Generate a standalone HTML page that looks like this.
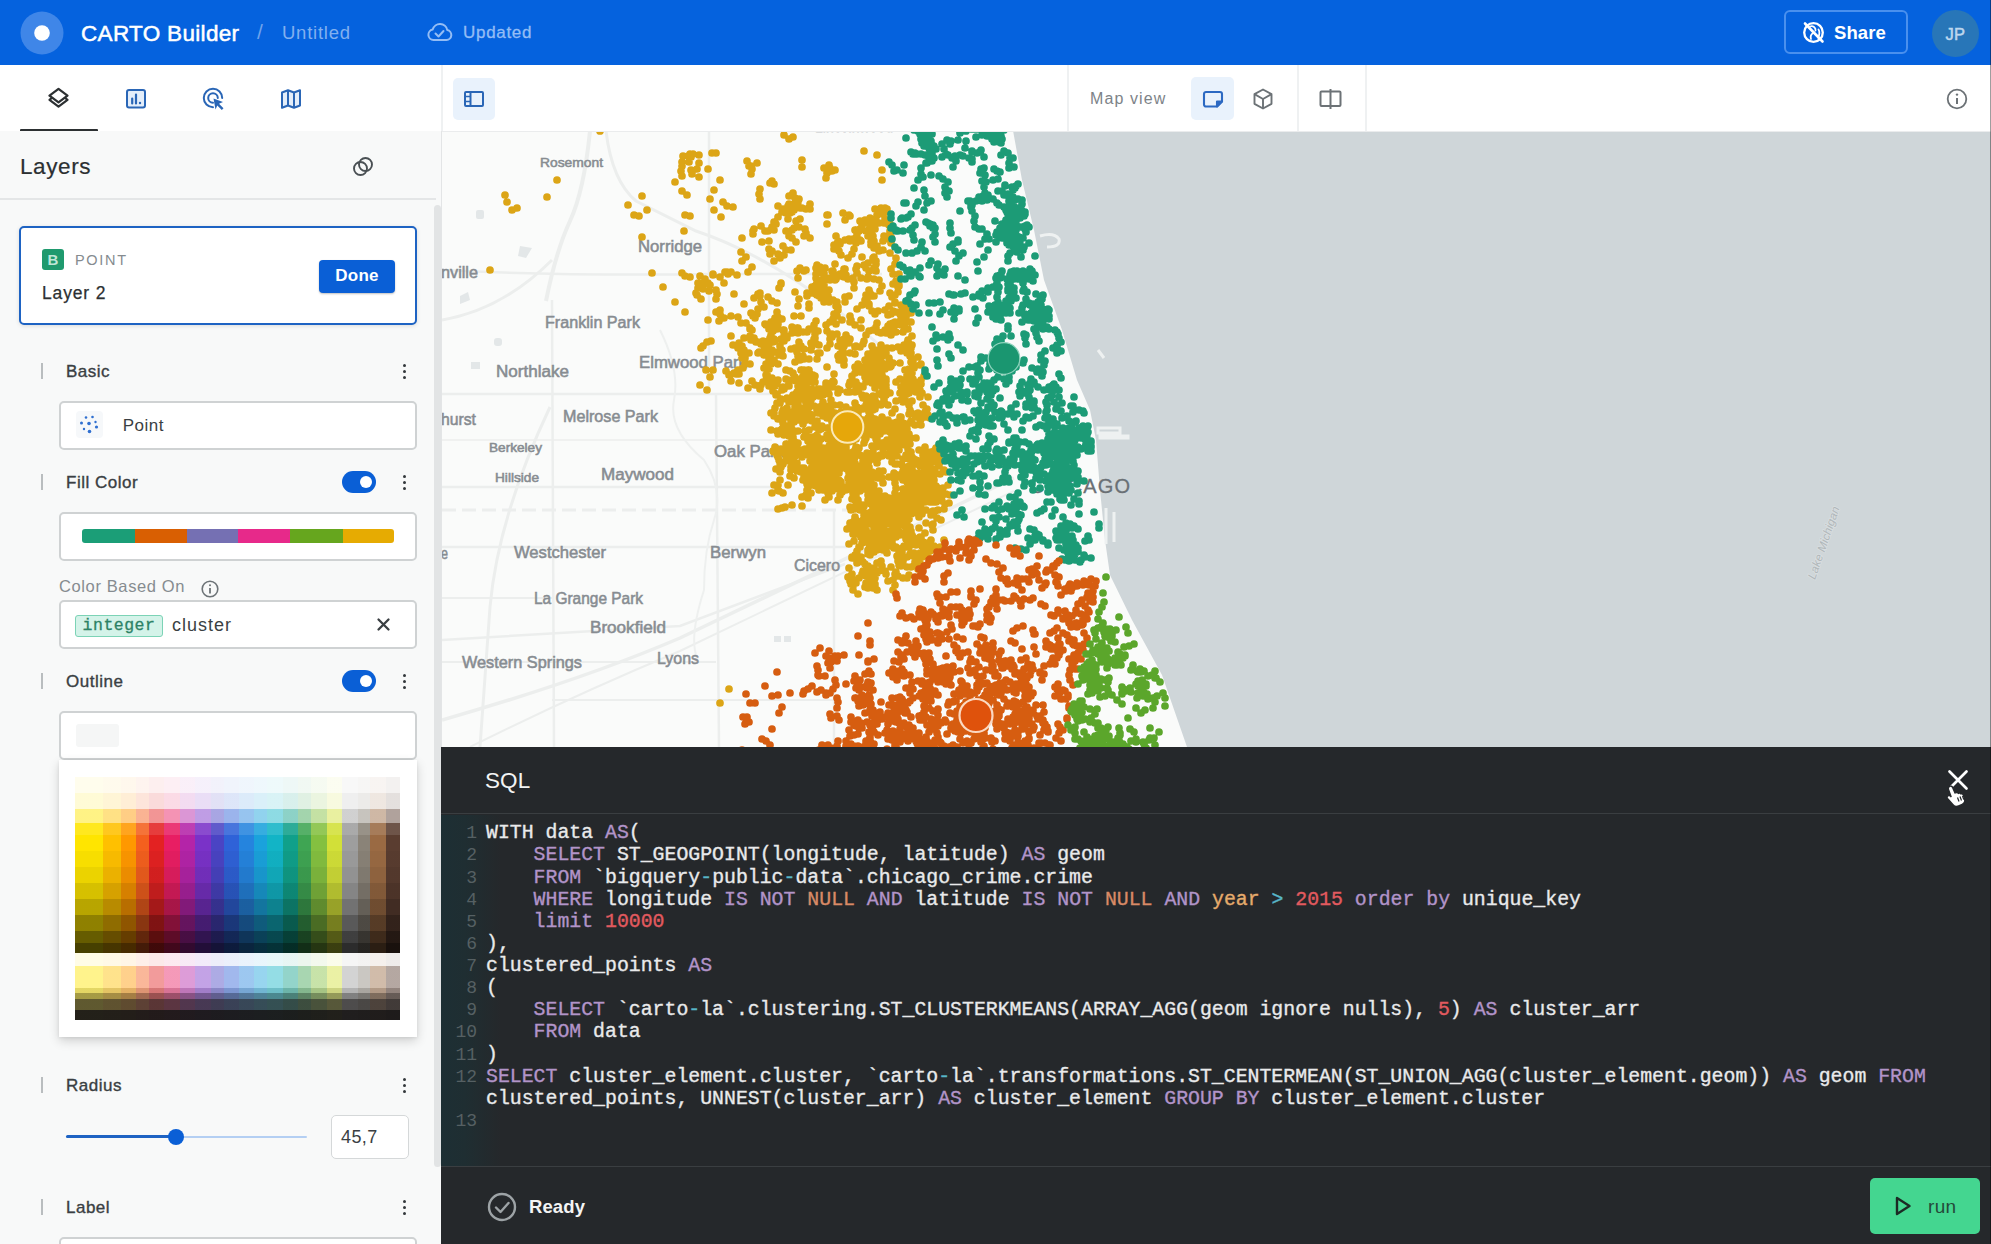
<!DOCTYPE html>
<html lang="en">
<head>
<meta charset="utf-8">
<title>CARTO Builder</title>
<style>
*{box-sizing:border-box;margin:0;padding:0}
html,body{width:1991px;height:1244px;overflow:hidden;background:#f8f9f9;font-family:"Liberation Sans",sans-serif;color:#2c3032}
.abs{position:absolute}
#app{position:relative;width:1991px;height:1244px;overflow:hidden}
/* header */
#hdr{left:0;top:0;width:1991px;height:65px;background:#0562de}
#hdr .t{position:absolute;white-space:nowrap;color:#fff}
/* toolbar */
#tb{left:0;top:65px;width:1991px;height:66px;background:#fff}
.vdiv{position:absolute;top:65px;width:1.500px;height:66px;background:#eff1f2}
/* left panel */
#lp{left:0;top:131px;width:441px;height:1113px;background:#f8f9f9}
.sec{position:absolute;left:0;width:441px;height:24px}
.sec .bar{position:absolute;left:41px;top:4px;width:2px;height:16px;background:#b9bdbf}
.sec .lbl{position:absolute;left:66px;top:1.800px;font-size:17px;line-height:22px;color:#3a3f43;-webkit-text-stroke:.36px #3a3f43;letter-spacing:.5px;white-space:nowrap}
.keb{position:absolute;left:403px;top:4.500px;width:4px;height:16px}
.keb i{position:absolute;left:.2px;width:3.3px;height:3.3px;border-radius:50%;background:#33383b}
.box{position:absolute;left:59px;width:358px;height:49px;background:#fff;border:2px solid #cfd2d3;border-radius:5px}
.tog{position:absolute;left:342px;width:34px;height:22px;border-radius:11px;background:#0a5fd6}
.tog i{position:absolute;right:4.5px;top:5px;width:12px;height:12px;border-radius:50%;background:#fff}
/* sql */
#sql{left:441px;top:747px;width:1550px;height:497px;background:#25282b}
.code{position:absolute;left:45px;white-space:pre;font-family:"Liberation Mono",monospace;font-size:19.84px;line-height:22.12px;color:#e9eaeb;-webkit-text-stroke:.35px currentColor}
.ln{position:absolute;left:0;width:36px;text-align:right;font-family:"Liberation Mono",monospace;font-size:18px;line-height:22.12px;color:#566063;white-space:pre}
.k{color:#b294c9}.o{color:#d98a66}.n{color:#e25a5f}.c{color:#58b6c8}.y{color:#e5ab6c}
.ml{position:absolute;white-space:nowrap;color:#878c91;font-weight:bold;-webkit-text-stroke:.2px #fff;paint-order:stroke;letter-spacing:-.2px}
</style>
</head>
<body>
<div id="app">

<!-- ================= HEADER ================= -->
<div id="hdr" class="abs">
  <svg class="abs" style="left:19px;top:9.700px" width="46" height="46" viewBox="0 0 46 46"><circle cx="23" cy="23" r="21.5" fill="#3f86e8"/><circle cx="23" cy="23" r="7.800" fill="#fff"/></svg>
  <div class="t" style="left:81px;top:19.500px;font-size:22.5px;line-height:28px;-webkit-text-stroke:.5px #fff;letter-spacing:.32px">CARTO Builder</div>
  <div class="t" style="left:257px;top:18px;font-size:21px;line-height:28px;color:#6fa3ec">/</div>
  <div class="t" style="left:282px;top:20px;font-size:18.500px;line-height:26px;color:#82b0ef;letter-spacing:.75px">Untitled</div>
  <svg class="abs" style="left:426px;top:21px" width="27" height="22" viewBox="0 0 27 22" fill="none" stroke="#94bdf5" stroke-width="2" stroke-linecap="round" stroke-linejoin="round"><path d="M7.5 19h13a5 5 0 0 0 .8-9.9A7.5 7.5 0 0 0 6.700 8.500 5.300 5.300 0 0 0 7.500 19z"/><path d="M9.5 12.500l3 3 5-5.500"/></svg>
  <div class="t" style="left:463px;top:21.200px;font-size:17px;line-height:24px;color:#94bdf5;-webkit-text-stroke:.3px #94bdf5;letter-spacing:.7px">Updated</div>

  <div class="abs" style="left:1784px;top:10px;width:124px;height:44px;border:2px solid #4a90ee;border-radius:6px"></div>
  <svg class="abs" style="left:1801px;top:20px" width="25" height="25" viewBox="0 0 25 25" fill="none" stroke="#fff" stroke-width="2.300" stroke-linecap="round"><circle cx="12.500" cy="12.500" r="9.300"/><path d="M4 3.500l17.500 18" stroke-width="2.600"/><path d="M9 6.500c3-1 6 1 5.500 4M10 19c-1-3 0-5 3-6.500M17.500 9.500c1.500 2 1 6-.5 8" stroke-width="1.800"/></svg>
  <div class="t" style="left:1834px;top:20px;font-size:18.5px;line-height:26px;font-weight:bold;letter-spacing:.1px">Share</div>
  <div class="abs" style="left:1932px;top:10px;width:47px;height:47px;border-radius:50%;background:#2876b8"></div>
  <div class="t" style="left:1932px;top:22px;width:47px;text-align:center;font-size:16.500px;line-height:24px;color:#bdd7ee;letter-spacing:.3px;-webkit-text-stroke:.5px #bdd7ee">JP</div>
</div>

<!-- ================= TOOLBAR ================= -->
<div id="tb" class="abs"></div>
<div class="abs" style="left:0;top:131px;width:1991px;height:2px;background:linear-gradient(#e6e8e9,rgba(230,232,233,0))"></div>
<!-- left tabs -->
<svg class="abs" style="left:48px;top:87px" width="22" height="22" viewBox="0 0 22 22" fill="none" stroke="#2c3032" stroke-width="2.200" stroke-linejoin="round" stroke-linecap="round"><path d="M10.500 1.800l9 6.800-9 6.800-9-6.800z"/><path d="M3.600 11.200L1.500 12.800l9 6.800 9-6.800-2.100-1.600"/></svg>
<svg class="abs" style="left:125px;top:88px" width="22" height="22" viewBox="0 0 22 22" fill="none" stroke="#2a66b6" stroke-width="2" stroke-linecap="round"><rect x="2" y="2" width="18" height="17.500" rx="2" fill="#e4eefa"/><path d="M7.200 15.500v-5M11 15.500V6.500" stroke-width="2.200"/><circle cx="15" cy="15" r="1.200" fill="#2a66b6" stroke="none"/></svg>
<svg class="abs" style="left:202px;top:87px" width="24" height="24" viewBox="0 0 24 24" fill="none" stroke="#2a66b6" stroke-width="2" stroke-linecap="round"><path d="M20.200 11A9.200 9.200 0 1 0 11 20.200"/><path d="M15.800 11A4.800 4.800 0 1 0 11 15.800"/><path d="M11.500 11.500l9.500 3.500-4 1.800 4.500 4.500-1.700 1.700-4.500-4.500-1.800 4z" fill="#2a66b6" stroke="none"/></svg>
<svg class="abs" style="left:280px;top:88px" width="22" height="22" viewBox="0 0 22 22" fill="#e4eefa" stroke="#2a66b6" stroke-width="2" stroke-linejoin="round"><path d="M2 4.500l6-2.300 6 2.300 6-2.300v15.300l-6 2.300-6-2.300-6 2.300z"/><path d="M8 2.200v15.300M14 4.500v15.300"/></svg>
<div class="abs" style="left:20px;top:128.500px;width:77.500px;height:3px;background:#2c3032;border-radius:1px"></div>

<div class="vdiv" style="left:441px"></div>
<div class="abs" style="left:453px;top:78px;width:42px;height:42px;border-radius:5px;background:#e9f2fc"></div>
<svg class="abs" style="left:463px;top:88px" width="22" height="22" viewBox="0 0 22 22" fill="none" stroke="#2a66b6" stroke-width="2"><rect x="2" y="4" width="18" height="14" rx="1"/><path d="M7.500 4v14" /><path d="M2 8.500h5.500M2 13.500h5.500" stroke-width="1.600"/></svg>

<div class="vdiv" style="left:1067px"></div>
<div class="abs" style="left:1090px;top:88px;font-size:16px;line-height:22px;color:#7d8388;white-space:nowrap;letter-spacing:1.100px">Map view</div>
<div class="abs" style="left:1191px;top:77px;width:43px;height:43px;border-radius:5px;background:#e9f2fc"></div>
<svg class="abs" style="left:1201px;top:87px" width="24" height="24" viewBox="0 0 24 24" fill="none" stroke="#2c69c2" stroke-width="2.100" stroke-linejoin="round"><path d="M5 5h14a2 2 0 0 1 2 2v7.500l-5 5H5a2 2 0 0 1-2-2V7a2 2 0 0 1 2-2z"/><path d="M21 14.500h-5v5z" fill="#2c69c2"/></svg>
<svg class="abs" style="left:1252px;top:87px" width="22" height="24" viewBox="0 0 22 24" fill="none" stroke="#6c7276" stroke-width="1.900" stroke-linejoin="round"><path d="M11 2.500l8.500 4.700v9.600L11 21.500l-8.500-4.700V7.200z"/><path d="M2.500 7.200l8.500 4.800 8.500-4.800M11 12v9.500"/></svg>
<div class="vdiv" style="left:1297px"></div>
<svg class="abs" style="left:1318px;top:87px" width="25" height="24" viewBox="0 0 25 24" fill="none" stroke="#6c7276" stroke-width="2"><rect x="2.500" y="4.500" width="20" height="14.500" rx="1"/><path d="M12.500 2v20"/></svg>
<div class="vdiv" style="left:1365px"></div>
<svg class="abs" style="left:1945px;top:87px" width="24" height="24" viewBox="0 0 24 24" fill="none" stroke="#6c7276" stroke-width="1.800"><circle cx="12" cy="12" r="9.300"/><path d="M12 11v6" stroke-width="2"/><circle cx="12" cy="7.600" r="1.200" fill="#6c7276" stroke="none"/></svg>

<svg class="abs" style="left:442px;top:132px" width="1549" height="615" viewBox="442 132 1549 615">
<rect x="442" y="131" width="1549" height="616" fill="#fafbfa"/>
<path d="M1012 125L1022 180L1034 230L1044 280L1062 330L1077 380L1090 410L1096 440L1100 490L1105 540L1110 575L1132 620L1162 675L1187 747L1200 790L1995 790L1995 125Z" fill="#cfd6d9"/>
<path d="M1040 236q14 -4 19 3q2 8 -12 8M1098 428h22v5h-22zM1100 436h28v2h-28zM1106 508v36M1114 512v30M1098 350l6 8" fill="none" stroke="#eef1f1" stroke-width="3"/>
<g fill="none" stroke="#eceeed" stroke-width="2.500">
<path d="M442 270q120 6 270 4h170"/><path d="M442 394h330"/><path d="M709 131v260"/><path d="M716 394l3 353"/><path d="M552 300l2 447"/>
<path d="M442 487h330"/><path d="M442 547h405"/><path d="M834 510v237"/><path d="M442 440h330" stroke-width="1.500"/>
<path d="M590 131q-6 60 -20 90t-24 80" stroke-width="4"/><path d="M606 131q6 50 30 70l60 30q90 30 190 120" stroke-width="3"/>
<path d="M442 320q60 -10 110 -60" stroke-width="3"/><path d="M480 747l10-140q8-90 60-200" stroke-width="3"/>
<path d="M442 720q140-40 238-82l334-160" stroke-width="3.500"/><path d="M470 747q100-50 210-96l334-160" stroke-width="2"/>
<path d="M442 640l238-14l165-62"/>
<path d="M442 510h405" stroke-dasharray="14 6" stroke-width="3"/>
<path d="M442 598h110M442 662h274M552 700h282" stroke-width="2"/>
<path d="M660 330q20 40 14 70t30 60q20 30 10 60t-10 70q-16 50 -6 70" stroke="#eef0ef" stroke-width="2"/>
</g>
<g fill="#e3e7e8"><rect x="476" y="210" width="8" height="9" rx="2"/><path d="M520 246l12 2-6 10-8-2z"/><path d="M460 296l8-4 2 8-10 4z"/><rect x="494" y="338" width="8" height="8" rx="3"/><rect x="471" y="362" width="9" height="7"/><rect x="774" y="636" width="7" height="6"/><rect x="784" y="636" width="7" height="6"/></g>

<g font-family="Liberation Sans, sans-serif" fill="#878c91" stroke="#878c91" stroke-width=".55">
<text x="540" y="166.7" font-size="13.5" textLength="63" lengthAdjust="spacingAndGlyphs">Rosemont</text>
<text x="638" y="251.8" font-size="16.5" textLength="64" lengthAdjust="spacingAndGlyphs">Norridge</text>
<text x="441" y="277.8" font-size="16.5" textLength="37" lengthAdjust="spacingAndGlyphs">nville</text>
<text x="545" y="327.8" font-size="16.5" textLength="95" lengthAdjust="spacingAndGlyphs">Franklin Park</text>
<text x="496" y="376.8" font-size="16.5" textLength="73" lengthAdjust="spacingAndGlyphs">Northlake</text>
<text x="639" y="367.8" font-size="16.5" textLength="108" lengthAdjust="spacingAndGlyphs">Elmwood Park</text>
<text x="441" y="424.8" font-size="16.5" textLength="35" lengthAdjust="spacingAndGlyphs">hurst</text>
<text x="563" y="421.8" font-size="16.5" textLength="95" lengthAdjust="spacingAndGlyphs">Melrose Park</text>
<text x="489" y="451.6" font-size="13" textLength="53" lengthAdjust="spacingAndGlyphs">Berkeley</text>
<text x="495" y="481.6" font-size="13" textLength="44" lengthAdjust="spacingAndGlyphs">Hillside</text>
<text x="601" y="479.8" font-size="16.5" textLength="73" lengthAdjust="spacingAndGlyphs">Maywood</text>
<text x="714" y="456.8" font-size="16.5" textLength="70" lengthAdjust="spacingAndGlyphs">Oak Park</text>
<text x="514" y="557.8" font-size="16.5" textLength="92" lengthAdjust="spacingAndGlyphs">Westchester</text>
<text x="710" y="557.8" font-size="16.5" textLength="56" lengthAdjust="spacingAndGlyphs">Berwyn</text>
<text x="794" y="570.8" font-size="16.5" textLength="46" lengthAdjust="spacingAndGlyphs">Cicero</text>
<text x="534" y="603.8" font-size="16.5" textLength="109" lengthAdjust="spacingAndGlyphs">La Grange Park</text>
<text x="590" y="632.8" font-size="16.5" textLength="76" lengthAdjust="spacingAndGlyphs">Brookfield</text>
<text x="462" y="667.8" font-size="16.5" textLength="120" lengthAdjust="spacingAndGlyphs">Western Springs</text>
<text x="657" y="663.8" font-size="16.5" textLength="42" lengthAdjust="spacingAndGlyphs">Lyons</text>
<text x="441" y="558.8" font-size="16.5" textLength="7" lengthAdjust="spacingAndGlyphs">e</text>
<text x="815" y="131.7" font-size="13.5" textLength="78" lengthAdjust="spacingAndGlyphs">Lincolnwood</text>
<text x="1030" y="493" font-size="20" fill="#6a7075" stroke="#6a7075" stroke-width=".3" textLength="100" lengthAdjust="spacing">CHICAGO</text>
</g>
<text transform="translate(1815,580) rotate(-71)" font-family="Liberation Sans, sans-serif" font-style="italic" font-size="11.500" fill="#b0b7ba" stroke="#d9dee0" stroke-width="1.600" paint-order="stroke" textLength="76" lengthAdjust="spacingAndGlyphs">Lake Michigan</text>
<path d="M784 435h0M789 436h0M793 437h0M862 471h0M827 278h0M899 555h0M912 401h0M770 351h0M705 279h0M831 476h0M854 430h0M713 275h0M772 385h0M880 515h0M817 478h0M817 331h0M742 261h0M860 505h0M925 550h0M927 547h0M835 421h0M907 480h0M821 272h0M878 311h0M875 314h0M786 444h0M791 443h0M796 447h0M913 362h0M693 154h0M688 156h0M683 156h0M868 263h0M864 265h0M803 332h0M751 166h0M747 161h0M830 322h0M897 443h0M896 448h0M904 518h0M926 510h0M922 514h0M916 513h0M909 515h0M863 469h0M720 310h0M900 363h0M845 220h0M923 455h0M815 376h0M888 420h0M893 424h0M806 270h0M800 268h0M797 271h0M885 310h0M889 306h0M833 440h0M836 443h0M891 444h0M915 387h0M901 505h0M901 509h0M877 323h0M876 327h0M878 332h0M879 528h0M931 477h0M932 477h0M926 478h0M921 478h0M787 447h0M781 449h0M826 293h0M855 450h0M859 448h0M864 443h0M818 466h0M821 472h0M891 567h0M867 425h0M870 429h0M907 557h0M880 210h0M873 396h0M870 399h0M903 332h0M906 506h0M912 506h0M917 510h0M847 469h0M853 472h0M856 475h0M940 462h0M939 466h0M933 469h0M886 535h0M880 537h0M861 420h0M852 461h0M855 463h0M862 465h0M808 486h0M866 537h0M861 466h0M812 382h0M791 470h0M906 503h0M879 544h0M877 550h0M787 428h0M790 476h0M882 516h0M882 521h0M863 420h0M888 500h0M938 488h0M859 367h0M861 371h0M836 475h0M852 418h0M853 423h0M908 449h0M892 522h0M827 367h0M805 398h0M818 447h0M898 425h0M892 426h0M888 427h0M859 430h0M863 433h0M899 286h0M703 286h0M925 468h0M924 472h0M786 399h0M777 312h0M775 318h0M771 322h0M805 431h0M880 291h0M941 493h0M941 499h0M852 412h0M769 378h0M763 382h0M761 385h0M872 472h0M910 383h0M802 457h0M855 457h0M860 532h0M874 485h0M744 350h0M840 469h0M880 434h0M876 439h0M807 484h0M707 390h0M815 334h0M814 339h0M928 397h0M793 458h0M710 377h0M819 451h0M824 452h0M764 307h0M880 421h0M794 316h0M801 316h0M903 386h0M905 393h0M909 393h0M894 478h0M889 477h0M863 562h0M899 285h0M896 281h0M950 495h0M868 277h0M898 435h0M902 439h0M905 311h0M868 357h0M869 361h0M764 368h0M817 470h0M816 475h0M810 478h0M804 476h0M808 478h0M903 510h0M786 370h0M790 371h0M713 274h0M775 352h0M883 513h0M878 511h0M914 553h0M920 553h0M875 358h0M772 350h0M771 354h0M871 541h0M870 545h0M883 521h0M869 412h0M871 417h0M873 423h0M690 154h0M883 508h0M886 364h0M890 367h0M884 504h0M888 504h0M812 287h0M804 349h0M872 354h0M871 361h0M818 458h0M813 458h0M857 273h0M861 278h0M867 279h0M855 487h0M766 342h0M871 457h0M878 458h0M882 456h0M885 208h0M855 354h0M882 170h0M893 590h0M949 503h0M869 304h0M850 392h0M775 321h0M778 317h0M886 423h0M891 423h0M878 512h0M898 287h0M873 521h0M843 487h0M890 224h0M818 413h0M824 413h0M830 412h0M839 467h0M875 361h0M879 362h0M881 561h0M895 574h0M893 580h0M888 581h0M910 554h0M915 557h0M919 554h0M811 473h0M928 489h0M925 494h0M875 400h0M828 411h0M917 564h0M918 569h0M836 419h0M832 422h0M870 503h0M918 481h0M917 485h0M905 306h0M911 452h0M912 457h0M842 348h0M840 354h0M881 517h0M887 515h0M879 385h0M875 495h0M878 492h0M907 394h0M925 533h0M909 369h0M908 375h0M908 379h0M803 423h0M833 274h0M877 358h0M872 475h0M869 433h0M873 435h0M897 524h0M898 517h0M890 531h0M893 533h0M721 217h0M780 480h0M778 485h0M908 376h0M782 429h0M851 410h0M855 409h0M858 413h0M790 209h0M887 209h0M888 546h0M881 546h0M880 542h0M808 390h0M799 397h0M925 412h0M929 489h0M909 497h0M912 499h0M838 346h0M892 502h0M881 404h0M912 462h0M758 294h0M754 298h0M864 526h0M926 523h0M933 524h0M821 480h0M825 475h0M822 469h0M934 492h0M939 492h0M942 496h0M855 555h0M896 423h0M896 428h0M827 462h0M836 461h0M868 517h0M902 501h0M900 504h0M765 342h0M838 500h0M874 373h0M875 377h0M872 383h0M896 537h0M859 532h0M866 531h0M871 533h0M793 443h0M791 449h0M795 454h0M916 464h0M920 466h0M774 413h0M798 420h0M876 220h0M879 223h0M884 223h0M880 513h0M884 518h0M932 496h0M852 558h0M919 463h0M924 466h0M924 473h0M816 289h0M821 395h0M921 538h0M882 395h0M884 399h0M798 431h0M793 433h0M893 323h0M895 515h0M854 580h0M856 506h0M851 510h0M804 412h0M801 418h0M809 359h0M837 462h0M853 489h0M716 312h0M720 314h0M724 318h0M876 447h0M873 452h0M944 470h0M786 432h0M856 230h0M786 336h0M907 385h0M908 390h0M905 395h0M807 479h0M803 480h0M804 468h0M811 376h0M798 356h0M795 362h0M874 398h0M872 402h0M866 405h0M920 365h0M840 444h0M846 447h0M766 375h0M772 378h0M813 437h0M734 294h0M794 418h0M791 422h0M788 426h0M827 410h0M829 413h0M830 418h0M796 469h0M873 508h0M879 512h0M923 405h0M839 458h0M830 339h0M830 344h0M863 469h0M894 531h0M898 528h0M916 481h0M788 206h0M783 209h0M778 206h0M932 493h0M930 498h0M888 431h0M817 359h0M876 423h0M775 381h0M866 529h0M912 472h0M833 320h0M836 324h0M691 157h0M689 162h0M761 344h0M881 211h0M875 209h0M767 374h0M846 464h0M879 507h0M882 512h0M885 515h0M850 241h0M856 243h0M861 241h0M891 538h0M892 542h0M896 547h0M833 457h0M891 269h0M895 264h0M896 258h0M880 524h0M858 481h0M808 441h0M813 444h0M819 442h0M924 462h0M930 460h0M931 484h0M821 454h0M816 455h0M720 277h0M724 283h0M800 408h0M795 407h0M801 450h0M933 502h0M874 407h0M835 413h0M836 417h0M766 325h0M853 278h0M884 529h0M880 533h0M904 469h0M909 466h0M901 351h0M904 347h0M910 348h0M843 213h0M849 215h0M856 417h0M853 422h0M868 524h0M871 519h0M829 472h0M802 160h0M802 167h0M903 480h0M875 388h0M879 394h0M910 507h0M908 329h0M874 257h0M876 261h0M874 268h0M894 427h0M898 427h0M902 429h0M842 420h0M836 419h0M723 202h0M727 206h0M733 207h0M833 423h0M830 444h0M832 451h0M772 301h0M777 303h0M805 229h0M806 233h0M739 343h0M739 348h0M815 485h0M774 385h0M896 572h0M868 486h0M864 489h0M810 476h0M713 370h0M919 528h0M900 417h0M860 221h0M862 225h0M860 229h0M885 521h0M769 249h0M770 254h0M774 222h0M772 227h0M768 231h0M856 583h0M851 584h0M871 535h0M685 312h0M801 472h0M699 163h0M697 169h0M842 447h0M846 449h0M847 453h0M905 370h0M912 373h0M911 379h0M755 318h0M835 170h0M699 155h0M850 507h0M889 498h0M921 384h0M920 390h0M916 392h0M836 316h0M777 394h0M781 399h0M787 398h0M865 374h0M867 378h0M797 328h0M798 333h0M890 425h0M830 483h0M828 488h0M828 493h0M840 469h0M815 427h0M910 474h0M820 459h0M818 464h0M710 285h0M906 379h0M913 380h0M839 440h0M761 226h0M765 231h0M935 450h0M846 277h0M852 499h0M858 500h0M863 505h0M810 444h0M857 485h0M927 498h0M931 502h0M819 488h0M823 490h0M879 512h0M876 516h0M870 519h0M896 488h0M871 515h0M866 513h0M864 506h0M712 153h0M716 153h0M802 389h0M803 394h0M916 500h0M905 494h0M909 497h0M914 494h0M802 506h0M862 468h0M863 474h0M866 477h0M892 518h0M804 271h0M698 283h0M933 462h0M928 464h0M885 219h0M778 509h0M785 507h0M792 505h0M769 386h0M775 386h0M842 458h0M841 463h0M922 546h0M862 543h0M872 459h0M869 306h0M879 471h0M883 471h0M909 434h0M862 257h0M910 346h0M830 168h0M895 325h0M901 325h0M869 478h0M874 475h0M795 198h0M799 199h0M742 346h0M744 351h0M749 353h0M823 409h0M845 269h0M698 288h0M703 289h0M709 291h0M858 431h0M853 431h0M821 294h0M821 298h0M824 302h0M783 410h0M782 415h0M778 419h0M831 383h0M826 383h0M862 305h0M857 309h0M944 540h0M798 399h0M798 404h0M850 241h0M845 240h0M868 433h0M867 453h0M896 312h0M891 314h0M809 448h0M813 454h0M869 544h0M872 549h0M832 271h0M817 282h0M882 498h0M758 353h0M895 302h0M774 339h0M843 355h0M838 356h0M833 458h0M819 391h0M820 395h0M714 210h0M804 395h0M803 399h0M835 264h0M900 523h0M895 521h0M889 521h0M929 470h0M930 475h0M889 456h0M892 462h0M807 413h0M869 490h0M860 547h0M868 491h0M872 495h0M877 497h0M847 412h0M842 413h0M849 296h0M800 451h0M903 534h0M906 539h0M904 546h0M775 341h0M830 452h0M876 501h0M874 507h0M869 495h0M866 521h0M873 522h0M796 406h0M795 410h0M839 486h0M817 270h0M917 507h0M848 433h0M777 403h0M875 409h0M936 486h0M760 189h0M759 194h0M760 199h0M826 460h0M768 341h0M855 421h0M859 418h0M834 476h0M839 473h0M903 561h0M832 445h0M793 137h0M789 139h0M784 135h0M883 541h0M879 545h0M866 531h0M882 455h0M887 454h0M893 456h0M812 473h0M816 474h0M911 496h0M913 501h0M914 506h0M800 417h0M806 419h0M871 481h0M845 297h0M845 302h0M896 507h0M891 512h0M817 454h0M903 429h0M934 480h0M932 484h0M929 490h0M826 471h0M819 396h0M813 397h0M884 355h0M905 515h0M906 520h0M886 540h0M810 479h0M813 485h0M866 483h0M870 486h0M872 489h0M868 576h0M874 574h0M879 571h0M801 370h0M801 384h0M828 428h0M822 426h0M831 445h0M835 447h0M839 449h0M907 306h0M901 305h0M870 402h0M869 406h0M827 169h0M762 242h0M901 566h0M868 588h0M930 500h0M750 329h0M750 336h0M751 340h0M826 451h0M868 464h0M863 461h0M911 345h0M825 268h0M822 273h0M824 277h0M882 417h0M884 420h0M818 353h0M873 270h0M744 304h0M803 454h0M808 455h0M813 458h0M883 483h0M842 434h0M837 439h0M830 441h0M814 446h0M903 504h0M900 510h0M896 514h0M853 497h0M906 478h0M910 481h0M913 484h0M855 452h0M891 430h0M887 426h0M865 377h0M868 373h0M878 549h0M782 419h0M904 431h0M905 436h0M909 519h0M863 408h0M804 236h0M810 238h0M865 429h0M868 433h0M835 477h0M870 415h0M875 419h0M843 351h0M778 380h0M863 371h0M902 533h0M896 529h0M904 394h0M874 550h0M878 549h0M882 544h0M904 519h0M881 361h0M879 368h0M909 414h0M914 414h0M917 417h0M804 437h0M813 442h0M818 447h0M826 280h0M830 280h0M835 280h0M869 290h0M874 296h0M774 184h0M770 183h0M869 571h0M904 547h0M908 547h0M931 540h0M836 478h0M830 482h0M829 487h0M759 352h0M882 384h0M886 379h0M895 446h0M899 445h0M905 445h0M779 491h0M920 466h0M877 573h0M801 420h0M836 306h0M838 310h0M833 275h0M836 279h0M894 515h0M890 518h0M907 529h0M910 376h0M899 434h0M904 436h0M795 415h0M798 418h0M859 479h0M859 484h0M857 490h0M821 478h0M934 500h0M710 199h0M817 446h0M813 448h0M902 495h0M897 498h0M897 477h0M895 483h0M858 391h0M862 395h0M864 527h0M909 478h0M830 430h0M771 326h0M777 328h0M860 386h0M870 522h0M749 166h0M752 169h0M751 174h0M858 469h0M775 447h0M774 452h0M868 566h0M908 438h0M868 500h0M840 244h0M862 225h0M859 231h0M815 286h0M813 290h0M807 293h0M876 571h0M873 576h0M943 488h0M859 527h0M911 322h0M832 337h0M742 238h0M781 339h0M784 336h0M784 332h0M863 475h0M893 311h0M888 315h0M852 456h0M917 502h0M783 411h0M787 408h0M911 485h0M915 487h0M779 355h0M862 574h0M859 578h0M855 487h0M812 346h0M811 350h0M804 359h0M913 474h0M918 473h0M900 549h0M907 547h0M910 545h0M774 416h0M861 473h0M877 531h0M810 381h0M850 523h0M847 529h0M870 555h0M908 340h0M912 336h0M847 458h0M843 462h0M838 465h0M822 461h0M811 420h0M865 300h0M828 385h0M832 387h0M838 389h0M823 457h0M812 484h0M815 481h0M795 292h0M873 236h0M894 448h0M895 454h0M797 463h0M773 331h0M769 329h0M939 458h0M770 338h0M898 561h0M899 565h0M811 343h0M811 349h0M843 454h0M922 545h0M902 307h0M853 239h0M857 238h0M844 277h0M787 444h0M788 450h0M854 249h0M852 254h0M848 258h0M894 517h0M897 521h0M909 467h0M873 406h0M926 417h0M780 346h0M782 350h0M783 356h0M832 386h0M834 382h0M868 461h0M872 459h0M878 457h0M838 422h0M840 426h0M830 482h0M891 366h0M885 369h0M881 372h0M780 258h0M774 261h0M820 452h0M826 453h0M918 413h0M849 385h0M862 435h0M865 440h0M868 487h0M871 493h0M869 498h0M894 450h0M919 517h0M912 492h0M914 459h0M919 461h0M924 458h0M913 386h0M789 236h0M792 238h0M796 242h0M877 246h0M897 438h0M870 236h0M871 242h0M748 388h0M852 557h0M739 383h0M760 293h0M719 321h0M849 473h0M890 362h0M867 223h0M827 215h0M872 430h0M878 427h0M894 441h0M860 526h0M855 530h0M849 528h0M785 416h0M782 413h0M861 557h0M858 561h0M827 331h0M832 334h0M806 395h0M806 399h0M836 425h0M833 300h0M837 302h0M838 307h0M773 391h0M807 377h0M805 383h0M691 170h0M877 429h0M834 434h0M841 434h0M845 429h0M853 530h0M853 534h0M854 541h0M904 382h0M820 291h0M817 294h0M819 454h0M894 473h0M898 475h0M905 476h0M899 450h0M877 590h0M893 501h0M898 503h0M831 400h0M834 405h0M862 367h0M864 371h0M869 371h0M871 504h0M876 506h0M908 382h0M913 379h0M820 389h0M823 395h0M900 314h0M890 324h0M891 329h0M886 333h0M806 495h0M811 493h0M755 385h0M760 389h0M904 345h0M930 481h0M931 485h0M804 370h0M753 231h0M850 464h0M911 482h0M909 486h0M809 470h0M809 474h0M699 287h0M696 293h0M861 320h0M857 483h0M856 488h0M860 491h0M854 495h0M860 455h0M916 438h0M920 512h0M829 165h0M824 168h0M859 490h0M877 438h0M876 445h0M872 446h0M906 424h0M907 429h0M905 436h0M907 482h0M902 465h0M903 471h0M701 284h0M708 283h0M940 461h0M856 474h0M849 477h0M849 482h0M920 537h0M898 559h0M868 467h0M867 473h0M883 449h0M880 455h0M885 238h0M903 513h0M780 403h0M775 408h0M872 573h0M927 490h0M754 338h0M893 363h0M793 463h0M791 467h0M758 309h0M757 314h0M850 483h0M852 487h0M859 486h0M895 585h0M800 416h0M796 415h0M933 511h0M752 267h0M748 272h0M766 364h0M769 360h0M787 338h0M784 341h0M799 342h0M801 346h0M937 490h0M829 446h0M835 450h0M839 449h0M868 552h0M816 268h0M816 274h0M849 544h0M785 411h0M909 478h0M913 482h0M922 557h0M829 290h0M828 296h0M829 302h0M912 469h0M789 204h0M795 203h0M875 584h0M817 442h0M898 496h0M902 498h0M907 500h0M809 472h0M896 401h0M901 400h0M905 399h0M837 470h0M903 396h0M903 402h0M819 430h0M817 435h0M820 439h0M850 316h0M850 322h0M857 234h0M860 240h0M774 360h0M778 364h0M875 268h0M894 525h0M895 530h0M883 250h0M879 251h0M868 423h0M869 427h0M778 217h0M854 482h0M851 481h0M855 230h0M890 518h0M776 224h0M774 230h0M836 236h0M891 534h0M852 480h0M857 482h0M816 485h0M811 392h0M809 397h0M919 560h0M827 418h0M823 416h0M744 338h0M900 323h0M904 325h0M873 396h0M866 396h0M795 206h0M792 333h0M860 524h0M862 529h0M871 585h0M865 587h0M897 422h0M894 427h0M890 431h0M849 442h0M854 439h0M741 353h0M914 476h0M920 476h0M924 472h0M925 549h0M868 457h0M920 507h0M859 473h0M789 445h0M792 449h0M783 463h0M781 467h0M934 546h0M772 251h0M778 254h0M784 255h0M825 483h0M830 486h0M817 421h0M852 415h0M869 461h0M840 276h0M829 394h0M856 534h0M827 453h0M823 457h0M826 460h0M892 326h0M786 231h0M792 230h0M909 459h0M913 472h0M908 474h0M902 474h0M895 323h0M891 326h0M907 522h0M905 526h0M868 495h0M840 405h0M846 407h0M836 468h0M889 498h0M902 552h0M899 441h0M873 400h0M731 336h0M868 518h0M797 392h0M794 396h0M837 473h0M815 338h0M815 342h0M819 345h0M799 382h0M798 386h0M837 448h0M838 453h0M877 356h0M778 434h0M784 433h0M787 429h0M743 352h0M904 489h0M771 379h0M774 384h0M716 290h0M717 294h0M716 299h0M788 434h0M792 429h0M912 389h0M912 535h0M856 269h0M905 500h0M908 503h0M789 196h0M793 193h0M866 536h0M871 539h0M878 541h0M884 515h0M888 517h0M889 522h0M923 502h0M814 290h0M817 295h0M915 385h0M786 379h0M883 443h0M888 441h0M792 327h0M798 328h0M912 345h0M828 439h0M866 464h0M900 535h0M874 279h0M869 278h0M894 548h0M899 553h0M903 559h0M803 376h0M802 380h0M887 510h0M883 512h0M856 447h0M828 489h0M812 415h0M807 420h0M933 514h0M937 518h0M941 520h0M809 430h0M807 435h0M881 421h0M879 546h0M883 550h0M887 553h0M844 269h0M846 275h0M682 191h0M687 195h0M886 212h0M881 208h0M867 483h0M862 485h0M935 511h0M931 515h0M782 508h0M866 268h0M872 311h0M927 491h0M893 425h0M908 508h0M726 371h0M729 375h0M731 381h0M826 390h0M844 365h0M703 346h0M707 342h0M711 341h0M904 524h0M796 221h0M856 496h0M777 384h0M773 386h0M883 533h0M895 511h0M899 510h0M809 370h0M883 241h0M888 237h0M890 231h0M892 436h0M936 502h0M870 420h0M891 334h0M896 332h0M882 443h0M889 443h0M895 445h0M900 475h0M883 387h0M884 392h0M870 401h0M924 376h0M906 346h0M875 586h0M750 364h0M916 460h0M880 510h0M883 506h0M861 424h0M866 427h0M871 426h0M837 334h0M882 367h0M863 371h0M802 370h0M808 370h0M893 284h0M868 491h0M802 419h0M816 285h0M765 324h0M881 345h0M887 348h0M877 463h0M827 428h0M821 429h0M787 452h0M787 458h0M827 470h0M822 467h0M834 477h0M836 483h0M837 469h0M873 410h0M908 375h0M911 372h0M841 449h0M807 476h0M928 547h0M930 551h0M928 556h0M868 375h0M816 447h0M842 459h0M877 563h0M882 566h0M885 571h0M901 319h0M901 323h0M791 452h0M796 454h0M841 448h0M835 448h0M818 293h0M921 565h0M894 423h0M895 427h0M891 335h0M782 432h0M870 553h0M910 423h0M915 425h0M867 408h0M863 409h0M877 519h0M778 324h0M782 319h0M806 386h0M812 389h0M850 382h0M837 483h0M838 487h0M825 466h0M868 354h0M796 415h0M794 422h0M855 325h0M861 328h0M874 367h0M876 372h0M791 349h0M903 516h0M866 295h0M870 293h0M873 221h0M872 225h0M875 229h0M794 411h0M792 416h0M786 417h0M915 506h0M921 508h0M794 402h0M855 392h0M927 493h0M892 430h0M896 434h0M745 358h0M725 272h0M865 375h0M844 346h0M708 320h0M879 404h0M782 212h0M786 213h0M792 212h0M808 487h0M768 297h0M795 419h0M792 423h0M789 427h0M933 461h0M866 474h0M913 556h0M865 539h0M869 539h0M915 389h0M824 410h0M830 411h0M911 313h0M877 539h0M900 477h0M793 395h0M799 397h0M804 398h0M794 478h0M778 490h0M783 493h0M773 451h0M815 382h0M818 389h0M823 390h0M885 420h0M802 399h0M907 578h0M798 278h0M795 348h0M797 352h0M905 315h0M781 452h0M786 456h0M879 532h0M882 536h0M888 537h0M876 539h0M876 545h0M846 462h0M778 469h0M851 320h0M920 494h0M922 499h0M925 502h0M809 304h0M809 308h0M819 427h0M875 366h0M734 373h0M739 374h0M811 400h0M901 417h0M903 423h0M889 225h0M884 505h0M891 505h0M855 517h0M769 241h0M818 476h0M823 478h0M838 393h0M934 500h0M937 495h0M932 454h0M789 386h0M863 398h0M869 400h0M873 400h0M733 345h0M738 348h0M880 534h0M831 473h0M844 346h0M901 520h0M867 366h0M871 371h0M781 430h0M895 497h0M823 402h0M923 553h0M919 558h0M903 309h0M901 314h0M860 372h0M906 455h0M903 459h0M803 356h0M872 346h0M875 350h0M810 414h0M846 335h0M844 339h0M840 340h0M896 500h0M901 496h0M896 498h0M895 502h0M822 426h0M911 495h0M905 496h0M849 568h0M780 463h0M865 360h0M865 367h0M900 379h0M881 347h0M739 343h0M907 343h0M857 266h0M877 377h0M798 443h0M866 382h0M863 387h0M856 387h0M915 499h0M871 245h0M874 248h0M873 236h0M874 241h0M882 386h0M882 392h0M886 349h0M892 348h0M898 347h0M868 418h0M921 419h0M921 425h0M919 450h0M924 452h0M769 344h0M895 303h0M907 375h0M909 575h0M833 319h0M833 271h0M804 386h0M807 392h0M806 397h0M741 252h0M746 257h0M856 475h0M844 449h0M842 453h0M841 457h0M770 352h0M774 383h0M742 358h0M890 253h0M881 537h0M866 583h0M870 586h0M885 238h0M938 510h0M944 509h0M870 230h0M911 531h0M815 460h0M816 466h0M848 279h0M854 282h0M854 288h0M816 486h0M819 490h0M827 408h0M826 415h0M867 301h0M872 296h0M690 216h0M863 575h0M869 573h0M833 444h0M772 181h0M795 456h0M853 383h0M841 444h0M837 449h0M792 397h0M789 402h0M927 452h0M839 360h0M844 360h0M682 273h0M685 276h0M690 277h0M940 547h0M934 549h0M911 438h0M908 443h0M886 385h0M886 389h0M890 393h0M880 365h0M878 371h0M918 544h0M923 542h0M868 578h0M872 578h0M810 378h0M857 551h0M853 452h0M833 478h0M829 482h0M871 418h0M840 390h0M804 455h0M909 405h0M910 410h0M888 326h0M885 330h0M881 333h0M781 284h0M810 457h0M844 269h0M840 274h0M897 556h0M915 562h0M920 563h0M854 521h0M852 525h0M743 368h0M738 370h0M736 374h0M750 328h0M869 424h0M863 428h0M861 433h0M766 380h0M838 455h0M835 458h0M927 466h0M922 464h0M811 485h0M807 490h0M861 469h0M873 351h0M864 341h0M860 347h0M856 346h0M838 241h0M834 245h0M834 249h0M874 377h0M877 381h0M785 453h0M790 455h0M873 539h0M877 542h0M904 492h0M788 485h0M939 497h0M942 501h0M945 504h0M835 457h0M842 423h0M922 393h0M920 397h0M856 407h0M855 412h0M803 357h0M800 360h0M889 447h0M893 452h0M894 456h0M848 418h0M817 265h0M783 246h0M786 250h0M791 250h0M879 352h0M924 452h0M930 456h0M866 231h0M868 236h0M849 239h0M832 477h0M836 482h0M839 487h0M936 493h0M932 498h0M930 502h0M833 481h0M833 486h0M931 452h0M936 448h0M923 480h0M839 480h0M898 528h0M899 534h0M771 413h0M808 498h0M802 497h0M758 342h0M832 431h0M836 435h0M842 320h0M857 505h0M830 447h0M873 260h0M878 446h0M720 180h0M832 171h0M827 173h0M826 178h0M906 317h0M905 323h0M883 393h0M886 388h0M886 381h0M901 422h0M915 539h0M916 545h0M821 480h0M841 484h0M822 284h0M822 288h0M841 419h0M840 426h0M838 430h0M925 416h0M920 419h0M823 448h0M826 451h0M863 571h0M865 575h0M868 567h0M869 572h0M866 576h0M897 464h0M870 226h0M914 473h0M918 476h0M891 546h0M836 433h0M838 428h0M772 413h0M873 427h0M879 426h0M842 468h0M871 568h0M874 228h0M783 387h0M865 398h0M867 402h0M879 491h0M829 468h0M832 471h0M745 358h0M745 364h0M836 481h0M886 574h0M858 481h0M827 224h0M809 329h0M814 325h0M816 321h0M771 430h0M777 431h0M868 550h0M868 554h0M831 457h0M824 456h0M816 477h0M838 436h0M840 442h0M845 444h0M820 481h0M822 486h0M824 490h0M930 502h0M834 374h0M883 364h0M813 375h0M872 502h0M878 501h0M833 381h0M776 469h0M780 472h0M938 451h0M937 456h0M868 427h0M872 425h0M835 458h0M833 463h0M779 460h0M783 464h0M768 342h0M764 346h0M793 373h0M795 377h0M892 440h0M891 445h0M899 274h0M893 274h0M829 406h0M800 219h0M796 221h0M794 228h0M859 504h0M835 461h0M873 510h0M876 516h0M898 292h0M895 295h0M890 293h0M934 493h0M878 478h0M882 478h0M771 326h0M777 329h0M783 330h0M837 484h0M837 488h0M842 492h0M794 210h0M790 213h0M788 219h0M714 190h0M895 322h0M921 364h0M884 543h0M877 541h0M873 541h0M756 342h0M763 341h0M880 352h0M812 293h0M807 296h0M918 489h0M921 491h0M926 488h0M819 481h0M814 477h0M809 478h0M802 208h0M819 467h0M812 466h0M798 356h0M918 357h0M802 468h0M805 471h0M847 392h0M751 313h0M845 341h0M878 369h0M911 348h0M911 353h0M907 531h0M907 536h0M864 151h0M944 494h0M851 525h0M805 449h0M798 202h0M800 208h0M806 209h0M788 414h0M877 504h0M861 523h0M871 512h0M870 517h0M878 526h0M884 526h0M860 524h0M911 490h0M906 490h0M913 537h0M908 540h0M909 547h0M824 273h0M830 334h0M808 471h0M802 469h0M797 471h0M943 488h0M948 485h0M877 155h0M806 403h0M807 408h0M881 405h0M786 444h0M783 449h0M752 330h0M776 395h0M896 500h0M901 504h0M905 503h0M682 166h0M681 171h0M682 176h0M799 299h0M856 520h0M878 360h0M882 356h0M820 267h0M873 514h0M872 518h0M930 467h0M799 415h0M802 410h0M846 450h0M849 456h0M890 534h0M800 392h0M799 399h0M851 484h0M846 487h0M853 441h0M850 581h0M853 586h0M824 285h0M821 439h0M827 435h0M895 464h0M764 368h0M841 412h0M838 416h0M841 419h0M935 472h0M929 468h0M861 478h0M867 478h0M871 472h0M911 567h0M910 493h0M770 341h0M883 383h0M810 461h0M913 490h0M851 467h0M887 538h0M893 536h0M911 312h0M819 296h0M825 297h0M829 299h0M900 516h0M898 522h0M855 403h0M857 407h0M897 429h0M891 237h0M891 243h0M706 370h0M887 430h0M784 330h0M778 457h0M884 424h0M882 428h0M877 429h0M884 431h0M890 432h0M882 501h0M877 505h0M873 505h0M819 407h0M814 406h0M930 542h0M926 543h0M817 410h0M701 299h0M697 295h0M899 444h0M896 450h0M787 446h0M791 449h0M797 449h0M895 524h0M931 486h0M925 485h0M858 594h0M853 590h0M852 574h0M848 577h0M855 434h0M815 462h0M883 534h0M753 316h0M730 375h0M870 359h0M866 434h0M866 438h0M893 323h0M798 306h0M792 397h0M911 421h0M916 417h0M882 180h0M890 232h0M832 480h0M836 483h0M840 481h0M872 228h0M874 222h0M813 396h0M878 434h0M863 344h0M848 478h0M773 342h0M752 381h0M921 380h0M836 248h0M839 251h0M841 255h0M836 439h0M782 390h0M820 353h0M910 527h0M795 379h0M902 442h0M907 441h0M910 444h0M855 373h0M852 376h0M840 484h0M941 497h0M946 494h0M855 347h0M821 449h0M824 451h0M828 453h0M925 472h0M827 348h0M859 547h0M809 407h0M932 525h0M933 530h0M864 515h0M863 520h0M864 527h0M886 353h0M889 358h0M890 362h0M834 314h0M837 316h0M783 423h0M879 280h0M882 286h0M803 392h0M930 418h0M873 584h0M814 329h0M850 216h0M892 413h0M895 409h0M857 428h0M847 414h0M816 278h0M820 281h0M873 521h0M911 514h0M914 511h0M827 473h0M826 385h0M781 283h0M779 288h0M834 483h0M841 482h0M831 411h0M864 367h0M814 290h0M816 294h0M862 456h0M818 471h0M811 469h0M882 363h0M836 485h0M838 489h0M840 495h0M794 441h0M869 467h0M865 470h0M861 468h0M857 237h0M856 242h0M884 236h0M889 239h0M896 382h0M901 387h0M900 393h0M873 330h0M869 331h0M866 335h0M813 393h0M870 579h0M874 583h0M810 204h0M810 209h0M812 421h0M769 369h0M771 364h0M760 296h0M761 302h0M792 439h0M795 445h0M873 588h0M877 590h0M934 475h0M940 474h0M946 472h0M890 541h0M701 348h0M874 511h0M878 516h0M876 365h0M870 365h0M829 452h0M803 424h0M892 446h0M891 545h0M915 382h0M913 385h0M897 456h0M880 502h0M886 502h0M874 568h0M871 571h0M887 517h0M889 523h0M731 272h0M737 275h0M870 218h0M865 220h0M877 518h0M876 523h0M874 528h0M890 524h0M857 563h0M793 457h0M789 461h0M870 541h0M870 545h0M860 510h0M833 437h0M754 229h0M753 234h0M903 489h0M907 495h0M810 479h0M815 477h0M830 406h0M799 227h0M802 378h0M796 381h0M811 329h0M807 332h0M851 430h0M854 434h0M856 439h0M902 498h0M911 362h0M914 368h0M777 455h0M865 564h0M789 383h0M907 353h0M910 356h0M876 525h0M700 276h0M774 485h0M923 486h0M922 492h0M924 497h0M927 409h0M928 415h0M892 297h0M913 542h0M874 552h0M876 548h0M873 537h0M882 535h0M834 453h0M834 458h0M874 508h0M784 389h0M788 386h0M791 380h0M883 507h0M895 512h0M898 516h0M901 521h0M853 483h0M852 488h0M846 490h0M917 482h0M925 447h0M817 472h0M882 375h0M884 380h0M849 431h0M846 434h0M843 436h0M869 362h0M853 493h0M855 499h0M913 359h0M856 382h0M856 388h0M731 316h0M855 500h0M853 507h0M895 493h0M849 343h0M850 339h0M832 491h0M829 497h0M825 500h0M835 463h0M841 466h0M869 271h0M907 567h0M885 496h0M806 384h0M794 463h0M796 470h0M873 258h0M855 509h0M876 264h0M876 271h0M858 364h0M855 367h0M700 385h0M886 395h0M884 400h0M888 405h0M839 420h0M838 426h0M833 429h0M875 575h0M887 440h0M913 494h0M920 495h0M919 511h0M875 578h0M903 578h0M889 431h0M870 493h0M873 495h0M878 495h0M738 317h0M741 323h0M746 323h0M801 386h0M800 390h0M877 215h0M882 214h0M850 353h0M728 274h0M757 163h0M838 472h0M836 476h0M831 478h0M828 215h0M918 494h0M921 497h0M826 325h0M727 272h0M818 331h0M772 493h0M898 576h0M771 335h0M767 346h0M765 350h0M764 355h0M825 476h0M830 475h0M832 468h0M861 537h0M873 376h0M871 381h0M557 180h0M547 197h0M507 202h0M512 210h0M517 208h0M505 195h0M490 270h0M642 196h0M628 205h0M634 215h0M639 216h0M647 210h0M642 237h0M685 215h0M684 231h0M652 273h0M663 287h0M675 302h0M682 162h0M708 169h0M692 174h0M699 177h0M675 182h0M600 131h0M729 689h0M720 703h0" fill="none" stroke="#dca516" stroke-width="7.7" stroke-linecap="round"/>
<path d="M1000 275h0M1004 424h0M1057 426h0M1063 428h0M1011 526h0M969 367h0M1057 332h0M958 276h0M963 350h0M1049 461h0M1030 529h0M1034 530h0M1037 534h0M1024 334h0M1025 338h0M1026 344h0M1078 447h0M1075 451h0M1072 456h0M1010 276h0M1014 279h0M1031 450h0M1031 455h0M1027 457h0M914 130h0M1009 381h0M1006 384h0M944 275h0M1011 301h0M1007 306h0M1014 167h0M1083 426h0M1084 430h0M1067 542h0M950 144h0M1099 524h0M1007 212h0M939 272h0M931 175h0M978 318h0M976 323h0M942 144h0M944 149h0M946 154h0M1074 526h0M1078 529h0M1018 514h0M1018 521h0M1075 440h0M1038 326h0M974 411h0M1026 404h0M987 392h0M993 391h0M989 306h0M994 307h0M1056 445h0M1053 449h0M991 402h0M1045 459h0M988 456h0M992 460h0M992 467h0M1022 452h0M1017 452h0M1026 407h0M1032 408h0M963 371h0M1087 435h0M1029 279h0M1026 335h0M1017 236h0M1020 241h0M915 154h0M1031 465h0M982 291h0M979 294h0M1026 299h0M1023 305h0M999 205h0M1004 207h0M1046 481h0M1053 481h0M1058 477h0M1038 444h0M1035 447h0M1078 471h0M1060 535h0M1065 539h0M1067 542h0M1038 369h0M1028 390h0M1022 391h0M1020 396h0M1006 301h0M1000 305h0M944 454h0M948 460h0M954 459h0M977 462h0M982 461h0M1021 515h0M989 436h0M990 442h0M1019 392h0M1025 393h0M1056 390h0M1029 397h0M1034 401h0M1020 442h0M1017 446h0M1015 449h0M1015 188h0M1018 184h0M1060 479h0M1054 483h0M987 134h0M1074 422h0M1023 459h0M1021 465h0M1022 470h0M1018 244h0M1036 304h0M1030 305h0M1026 303h0M1018 279h0M1023 283h0M1012 234h0M1017 239h0M1023 238h0M1029 243h0M1058 334h0M1059 338h0M1061 342h0M895 247h0M898 250h0M1099 528h0M1000 398h0M1011 294h0M1009 298h0M1059 462h0M1062 467h0M1063 472h0M949 334h0M933 228h0M928 223h0M977 476h0M980 482h0M1069 555h0M1065 560h0M951 141h0M950 457h0M966 141h0M965 148h0M1036 472h0M1008 289h0M996 310h0M972 431h0M970 436h0M984 130h0M987 136h0M992 138h0M986 412h0M1081 449h0M911 230h0M913 235h0M914 240h0M891 228h0M963 472h0M963 476h0M961 481h0M932 134h0M1040 445h0M1050 435h0M1054 433h0M1060 446h0M980 488h0M1014 271h0M1012 276h0M1012 198h0M1012 202h0M1010 206h0M953 244h0M958 240h0M1053 435h0M1050 439h0M1048 445h0M1011 212h0M1013 219h0M1002 224h0M1008 223h0M1052 445h0M1034 329h0M1036 333h0M1037 337h0M1014 522h0M998 191h0M908 300h0M994 138h0M1063 475h0M1008 478h0M994 367h0M1012 208h0M1002 313h0M1016 404h0M1005 186h0M1002 191h0M1041 360h0M1010 525h0M1017 526h0M891 214h0M932 327h0M1061 469h0M1063 474h0M1071 472h0M1077 474h0M915 272h0M1018 276h0M1024 279h0M1011 408h0M1011 411h0M1008 414h0M1063 475h0M889 162h0M892 165h0M933 128h0M1015 230h0M1034 382h0M1030 383h0M1025 316h0M1039 535h0M1012 371h0M1007 369h0M974 464h0M971 469h0M1088 432h0M1045 361h0M1044 365h0M996 278h0M1001 275h0M924 146h0M928 146h0M931 142h0M1036 427h0M1040 425h0M1009 238h0M1007 243h0M1004 232h0M996 242h0M1004 225h0M1003 229h0M893 226h0M896 230h0M1039 324h0M990 408h0M1088 445h0M1091 451h0M944 444h0M949 446h0M993 180h0M986 182h0M982 181h0M950 223h0M950 228h0M951 233h0M1078 551h0M980 370h0M999 142h0M1064 430h0M957 418h0M957 423h0M933 148h0M926 128h0M1033 304h0M1038 302h0M1041 305h0M1002 139h0M1053 385h0M1054 390h0M1022 204h0M898 231h0M903 231h0M1021 549h0M1026 550h0M1025 212h0M934 387h0M981 403h0M994 142h0M1013 453h0M1018 454h0M958 473h0M1020 276h0M1026 277h0M1031 470h0M943 399h0M964 417h0M1060 446h0M1065 448h0M1071 448h0M910 270h0M1074 441h0M1069 438h0M1019 209h0M980 387h0M933 237h0M935 242h0M1043 372h0M1042 376h0M947 140h0M1069 561h0M1012 361h0M1016 367h0M1010 497h0M1015 497h0M1020 502h0M1067 439h0M984 168h0M985 175h0M1019 237h0M1017 242h0M1034 402h0M1088 536h0M1011 224h0M1006 229h0M953 392h0M955 396h0M951 400h0M959 443h0M954 447h0M949 449h0M983 420h0M1081 433h0M1076 436h0M1067 478h0M942 157h0M1052 490h0M1057 492h0M1062 493h0M992 508h0M921 168h0M921 174h0M918 180h0M1056 451h0M946 445h0M940 449h0M1065 540h0M1071 544h0M972 151h0M1091 442h0M983 198h0M1040 327h0M1043 329h0M1047 327h0M1088 451h0M1061 351h0M1006 210h0M891 218h0M920 128h0M920 134h0M1033 276h0M1060 464h0M1063 468h0M928 142h0M1058 535h0M945 423h0M940 422h0M1072 528h0M1059 466h0M1055 468h0M1052 474h0M957 388h0M961 392h0M965 394h0M1068 476h0M1067 482h0M955 156h0M960 155h0M1004 151h0M1001 155h0M1065 477h0M1070 476h0M1074 478h0M932 419h0M943 310h0M940 314h0M999 452h0M1001 458h0M1066 544h0M1052 484h0M1059 485h0M1000 537h0M1049 319h0M1061 526h0M1065 530h0M1010 366h0M939 406h0M940 413h0M1062 461h0M1062 468h0M1058 481h0M1057 345h0M1053 348h0M939 176h0M943 179h0M948 182h0M906 138h0M995 412h0M1002 412h0M910 275h0M907 271h0M903 267h0M962 448h0M966 451h0M1059 548h0M997 483h0M1018 531h0M962 464h0M966 467h0M966 473h0M1079 514h0M1001 341h0M995 344h0M975 367h0M978 373h0M1056 347h0M988 445h0M988 449h0M931 151h0M929 158h0M927 163h0M981 150h0M977 153h0M1008 153h0M1038 450h0M1044 453h0M1058 448h0M1062 452h0M1008 430h0M1071 505h0M1088 426h0M1045 310h0M1066 444h0M1068 448h0M1066 531h0M1067 537h0M1070 541h0M1061 500h0M998 292h0M993 287h0M988 288h0M924 190h0M925 196h0M975 430h0M962 400h0M968 401h0M931 157h0M996 319h0M1051 425h0M954 319h0M1070 454h0M1069 459h0M990 127h0M990 134h0M1010 222h0M1014 219h0M1018 215h0M1014 510h0M1074 499h0M1079 501h0M985 509h0M1072 536h0M960 491h0M955 251h0M996 235h0M1001 234h0M924 132h0M929 133h0M1029 418h0M1064 466h0M1059 374h0M1061 378h0M985 529h0M989 533h0M990 364h0M989 369h0M1016 228h0M1010 228h0M1007 223h0M1041 467h0M1020 392h0M1024 392h0M1029 391h0M968 201h0M971 207h0M1063 430h0M896 231h0M1057 481h0M1057 488h0M1063 491h0M996 539h0M993 426h0M1044 474h0M956 161h0M953 167h0M998 450h0M1004 450h0M1044 311h0M937 276h0M935 228h0M935 234h0M937 349h0M988 486h0M951 379h0M1014 228h0M1014 233h0M1037 513h0M1041 511h0M1044 509h0M1084 555h0M1081 560h0M1075 560h0M1000 228h0M997 232h0M1033 309h0M1085 541h0M1089 540h0M1051 454h0M1067 416h0M1062 418h0M1020 247h0M1016 247h0M1065 446h0M1062 453h0M1007 239h0M1010 243h0M1048 440h0M990 391h0M936 335h0M984 157h0M1012 214h0M1008 214h0M977 366h0M1054 464h0M1054 469h0M998 377h0M994 380h0M1068 436h0M1066 441h0M1061 443h0M972 127h0M1036 469h0M1033 465h0M1033 459h0M950 338h0M984 389h0M987 383h0M995 356h0M1020 386h0M1091 447h0M1085 447h0M1024 278h0M914 154h0M1031 379h0M1034 384h0M1038 387h0M979 456h0M984 456h0M1056 442h0M1063 497h0M1007 279h0M1086 444h0M1062 454h0M1030 315h0M1030 320h0M1026 417h0M1023 421h0M1015 443h0M1058 491h0M1061 495h0M960 211h0M897 170h0M903 173h0M995 313h0M988 312h0M1030 454h0M1018 493h0M968 128h0M963 130h0M1061 489h0M1066 489h0M1069 493h0M1049 449h0M1000 316h0M1001 320h0M990 463h0M1062 469h0M1058 473h0M1054 476h0M918 202h0M916 206h0M911 272h0M1055 472h0M999 352h0M1033 316h0M1039 315h0M950 449h0M953 454h0M915 225h0M931 141h0M928 143h0M922 143h0M1047 456h0M1049 460h0M1050 464h0M920 277h0M1015 452h0M1014 459h0M1015 465h0M1049 310h0M950 388h0M947 394h0M928 144h0M961 464h0M938 264h0M1012 514h0M986 386h0M991 383h0M926 222h0M930 224h0M1070 454h0M1077 455h0M1000 534h0M1008 480h0M1004 482h0M999 483h0M1009 357h0M1014 358h0M972 152h0M911 152h0M1013 158h0M1012 442h0M1016 438h0M917 154h0M1031 315h0M978 271h0M1079 428h0M958 140h0M958 480h0M951 480h0M959 447h0M966 446h0M1001 411h0M1000 417h0M985 466h0M1047 405h0M1047 410h0M1048 417h0M988 384h0M984 385h0M1014 456h0M1010 459h0M951 382h0M954 384h0M985 193h0M982 198h0M950 388h0M1032 451h0M999 319h0M1088 449h0M1091 446h0M1091 441h0M1053 423h0M1023 291h0M1027 292h0M945 461h0M950 461h0M1008 256h0M1008 261h0M934 128h0M987 420h0M990 426h0M1037 321h0M1042 324h0M1009 232h0M1018 241h0M1015 247h0M1004 355h0M1008 359h0M892 239h0M979 229h0M976 201h0M972 205h0M921 139h0M943 337h0M937 338h0M933 341h0M921 136h0M979 197h0M982 201h0M987 200h0M1024 360h0M1042 299h0M1040 304h0M987 399h0M1009 197h0M1013 202h0M1013 209h0M955 313h0M959 311h0M1064 550h0M963 417h0M965 280h0M1074 432h0M1048 545h0M1043 541h0M1009 208h0M929 154h0M1003 478h0M1009 482h0M1016 298h0M1022 322h0M1028 320h0M1056 482h0M1062 486h0M1067 484h0M908 217h0M902 218h0M1073 477h0M1024 289h0M1041 355h0M1045 351h0M1060 479h0M1052 439h0M1048 439h0M957 515h0M962 510h0M1008 194h0M1057 494h0M1006 232h0M1042 318h0M1061 433h0M1058 438h0M1046 318h0M991 133h0M985 133h0M1016 186h0M1013 190h0M1013 197h0M1065 485h0M1069 487h0M937 268h0M974 129h0M915 153h0M906 218h0M901 219h0M937 405h0M1029 227h0M1025 226h0M990 423h0M1010 194h0M949 405h0M998 510h0M1002 509h0M948 340h0M953 244h0M958 242h0M995 305h0M998 302h0M997 297h0M1036 309h0M1031 313h0M957 419h0M953 418h0M991 395h0M951 312h0M954 308h0M959 309h0M966 131h0M972 129h0M972 159h0M1014 417h0M1009 201h0M1044 312h0M1039 312h0M1040 468h0M1040 474h0M1079 504h0M925 155h0M1065 471h0M1067 474h0M1072 477h0M1050 449h0M1052 454h0M1049 459h0M1054 456h0M999 129h0M998 133h0M1001 136h0M1022 308h0M1025 314h0M1035 256h0M979 393h0M975 396h0M1032 271h0M1035 275h0M1033 281h0M997 276h0M1002 271h0M1050 390h0M1055 453h0M1057 450h0M1061 449h0M997 203h0M993 199h0M1016 230h0M1012 297h0M1010 158h0M1009 163h0M997 449h0M997 454h0M998 458h0M950 472h0M1019 313h0M983 196h0M988 195h0M982 522h0M1049 422h0M1044 426h0M1025 462h0M1003 360h0M1002 365h0M1070 438h0M1071 490h0M1027 315h0M999 465h0M925 372h0M995 518h0M1022 200h0M936 149h0M1037 317h0M1034 321h0M1004 379h0M1009 377h0M1081 436h0M1019 519h0M1072 424h0M1076 421h0M1065 538h0M1066 542h0M1009 442h0M1011 272h0M956 261h0M984 387h0M987 383h0M1056 475h0M1008 326h0M1004 195h0M1007 361h0M1002 364h0M998 364h0M1021 515h0M915 128h0M918 131h0M979 377h0M975 379h0M925 370h0M1064 461h0M1000 278h0M997 283h0M999 287h0M973 476h0M979 474h0M984 476h0M1004 361h0M997 171h0M1044 316h0M1049 316h0M963 459h0M1038 306h0M914 188h0M1052 395h0M1048 398h0M1046 402h0M1077 552h0M1078 548h0M1004 130h0M1072 455h0M1069 460h0M1073 412h0M1079 410h0M1083 411h0M1007 534h0M1023 250h0M1069 433h0M1073 430h0M996 389h0M1014 438h0M963 253h0M959 256h0M1009 245h0M911 304h0M916 305h0M958 345h0M960 133h0M1008 284h0M939 383h0M934 387h0M906 301h0M978 420h0M979 426h0M1046 412h0M976 137h0M982 135h0M996 315h0M993 317h0M1006 237h0M1009 219h0M1080 562h0M1085 557h0M1091 558h0M1059 485h0M994 405h0M1010 275h0M1025 214h0M1014 222h0M905 279h0M901 279h0M1027 454h0M1031 458h0M1047 447h0M922 242h0M921 247h0M1067 434h0M1064 437h0M1059 439h0M937 360h0M1058 471h0M1044 448h0M967 462h0M971 456h0M975 456h0M1000 530h0M1005 534h0M911 214h0M1064 490h0M1062 494h0M956 381h0M997 365h0M997 370h0M999 517h0M913 309h0M1062 559h0M1046 465h0M1043 463h0M993 518h0M996 521h0M995 527h0M1024 275h0M942 272h0M1012 187h0M894 171h0M928 138h0M930 132h0M1022 211h0M1017 208h0M984 417h0M1057 353h0M1002 238h0M1059 390h0M1059 397h0M1009 443h0M1061 459h0M1066 464h0M1069 468h0M915 291h0M910 295h0M973 383h0M976 380h0M984 383h0M992 139h0M926 163h0M932 161h0M1007 506h0M1049 434h0M1043 321h0M1039 325h0M1012 212h0M1017 212h0M979 410h0M1015 215h0M1064 474h0M1068 479h0M983 298h0M1044 328h0M1049 329h0M1055 330h0M1059 481h0M986 533h0M988 539h0M957 387h0M1016 240h0M1014 245h0M1055 425h0M1055 431h0M1057 435h0M1030 390h0M1011 212h0M1014 288h0M976 439h0M1006 519h0M1074 397h0M1010 313h0M1006 313h0M1001 313h0M1008 210h0M1045 418h0M1053 471h0M955 444h0M1000 236h0M1065 454h0M1000 172h0M1008 232h0M1042 443h0M1037 445h0M906 203h0M1047 429h0M981 361h0M1015 548h0M949 447h0M954 446h0M959 448h0M1015 230h0M1009 230h0M929 313h0M981 357h0M986 358h0M1002 417h0M949 294h0M953 295h0M1031 467h0M1057 534h0M1056 538h0M1052 452h0M1054 456h0M1063 445h0M981 169h0M999 128h0M994 132h0M1075 554h0M1070 556h0M1069 561h0M1085 439h0M1081 438h0M996 451h0M999 453h0M1010 308h0M1068 553h0M1014 200h0M975 393h0M978 397h0M1056 387h0M1065 455h0M931 261h0M929 265h0M1050 434h0M1010 253h0M1014 504h0M1054 477h0M1049 476h0M981 389h0M988 393h0M992 390h0M998 133h0M992 136h0M939 444h0M1017 414h0M1069 428h0M1064 430h0M1061 433h0M1075 422h0M1030 269h0M1031 275h0M995 221h0M1056 485h0M984 257h0M965 293h0M1035 468h0M1037 473h0M1036 478h0M1034 318h0M1006 468h0M998 179h0M980 244h0M985 239h0M987 234h0M911 276h0M967 392h0M963 393h0M1002 458h0M998 461h0M992 458h0M983 459h0M986 418h0M1078 477h0M1077 484h0M1073 478h0M1078 479h0M1084 481h0M1035 460h0M1005 185h0M949 354h0M951 358h0M1033 416h0M1072 436h0M1075 439h0M964 517h0M1009 509h0M1015 508h0M921 154h0M1024 216h0M1010 283h0M1012 462h0M1008 466h0M947 426h0M1062 403h0M1018 275h0M976 413h0M979 416h0M1078 493h0M925 251h0M933 225h0M1048 486h0M1053 484h0M1057 481h0M1021 209h0M1018 275h0M1023 275h0M1023 271h0M1028 274h0M994 138h0M1078 477h0M1056 452h0M1005 462h0M967 459h0M1005 472h0M1057 346h0M1061 477h0M985 495h0M979 494h0M945 193h0M947 197h0M931 201h0M927 203h0M924 210h0M1027 225h0M1025 229h0M910 230h0M1020 506h0M1024 507h0M961 396h0M967 394h0M904 203h0M992 529h0M987 532h0M984 536h0M1006 220h0M1012 221h0M1018 242h0M1016 247h0M989 239h0M983 449h0M1033 448h0M1062 465h0M1027 469h0M1025 475h0M961 379h0M960 385h0M943 449h0M900 265h0M1013 246h0M1015 251h0M1062 529h0M1056 531h0M1056 457h0M1012 370h0M979 387h0M1035 536h0M1035 540h0M1030 544h0M1002 362h0M1061 438h0M980 173h0M977 129h0M946 391h0M1021 227h0M1070 544h0M1076 545h0M1043 295h0M1040 300h0M1015 239h0M1022 238h0M1046 448h0M1042 448h0M948 155h0M952 158h0M1029 303h0M942 412h0M943 418h0M999 502h0M994 506h0M1071 426h0M1073 431h0M1078 437h0M1001 143h0M1013 204h0M952 464h0M1023 363h0M932 154h0M934 158h0M1071 426h0M1056 477h0M1014 216h0M1016 221h0M1017 226h0M929 148h0M932 145h0M994 169h0M1068 546h0M1072 548h0M945 187h0M949 191h0M1000 308h0M950 247h0M1022 430h0M993 310h0M1017 271h0M1022 276h0M988 422h0M978 432h0M930 226h0M979 296h0M973 297h0M1060 499h0M1064 500h0M954 495h0M904 165h0M1055 510h0M1052 516h0M1022 382h0M1028 385h0M1040 480h0M1064 485h0M1065 492h0M953 389h0M1036 294h0M943 440h0M943 445h0M945 450h0M940 302h0M934 303h0M929 303h0M1069 551h0M1071 406h0M1084 413h0M949 415h0M1073 443h0M1007 128h0M1001 130h0M1000 135h0M994 439h0M975 227h0M982 229h0M992 418h0M984 187h0M1004 312h0M935 416h0M965 421h0M970 420h0M979 533h0M978 538h0M1048 486h0M1048 492h0M1048 309h0M1025 442h0M1029 444h0M980 422h0M1017 252h0M1021 257h0M1056 409h0M1061 411h0M1047 417h0M1053 419h0M1057 424h0M1060 540h0M1066 455h0M1031 462h0M1001 339h0M1084 432h0M1070 458h0M1073 461h0M920 268h0M1015 216h0M1020 218h0M1008 291h0M1014 292h0M1026 232h0M985 413h0M988 407h0M1003 336h0M997 339h0M1094 512h0M987 126h0M1069 421h0M1047 502h0M1051 502h0M1064 493h0M927 376h0M1032 484h0M1033 490h0M986 126h0M1063 517h0M1066 523h0M1070 524h0M999 418h0M975 216h0M974 221h0M1009 168h0M912 228h0M988 292h0M1012 199h0M1018 199h0M1060 476h0M1064 481h0M961 294h0M954 295h0M938 366h0M1064 462h0M1038 537h0M1043 540h0M1048 543h0M1054 384h0M1049 387h0M1044 390h0M980 152h0M914 293h0M919 313h0M1038 447h0M1008 329h0M1011 336h0M988 250h0M1039 341h0M1057 540h0M1073 406h0M945 269h0M1012 234h0M1015 239h0M953 386h0M960 385h0M917 251h0M912 253h0M906 253h0M970 379h0M973 384h0M1028 538h0M1054 475h0M1055 480h0M1057 477h0M1015 200h0M1032 368h0M1037 372h0M975 309h0M977 262h0M973 488h0M923 177h0M980 538h0M930 142h0M934 146h0M1073 461h0M1074 465h0M1071 468h0M1046 455h0M1050 458h0M1056 455h0M1017 507h0M1023 506h0M1007 530h0M957 461h0M959 465h0M956 468h0M965 469h0M1073 540h0M1070 432h0M1049 480h0M1073 457h0M1029 403h0M1034 407h0M1038 411h0M993 354h0M1032 483h0M1024 247h0M943 401h0M938 403h0M970 201h0M971 205h0M972 211h0M1021 477h0M1025 482h0M1024 486h0M1070 486h0M913 154h0M1011 210h0M1054 402h0M1057 405h0M1005 225h0M963 156h0M969 158h0M972 162h0M947 399h0M929 135h0M981 420h0M986 425h0M1040 488h0M919 276h0" fill="none" stroke="#1c9b76" stroke-width="7.7" stroke-linecap="round"/>
<path d="M983 698h0M959 723h0M962 726h0M929 561h0M924 566h0M939 677h0M943 680h0M1020 749h0M902 699h0M838 656h0M844 655h0M995 741h0M968 543h0M966 547h0M966 553h0M980 735h0M870 641h0M870 645h0M931 612h0M992 665h0M954 753h0M969 539h0M976 541h0M910 693h0M913 689h0M818 675h0M977 691h0M970 692h0M964 690h0M960 715h0M922 654h0M929 653h0M966 731h0M961 733h0M988 697h0M992 692h0M868 662h0M1057 628h0M1058 724h0M1029 668h0M961 733h0M960 739h0M980 731h0M923 611h0M920 617h0M1058 613h0M1063 618h0M1068 619h0M1053 566h0M1050 570h0M1046 572h0M1029 739h0M1026 744h0M1028 748h0M931 691h0M925 691h0M1021 682h0M1025 685h0M1026 691h0M1016 735h0M887 730h0M890 732h0M963 615h0M865 674h0M778 695h0M1070 639h0M1074 640h0M1077 646h0M930 559h0M1029 687h0M1003 600h0M998 600h0M996 595h0M1015 730h0M1014 736h0M1010 741h0M892 698h0M889 705h0M1015 754h0M960 707h0M957 711h0M976 702h0M973 706h0M975 712h0M938 726h0M860 748h0M1033 669h0M930 688h0M977 676h0M931 701h0M926 701h0M951 549h0M906 710h0M1015 643h0M1051 750h0M984 650h0M986 645h0M1028 745h0M1026 750h0M742 750h0M744 754h0M1022 649h0M895 711h0M929 708h0M924 706h0M1068 615h0M1058 577h0M1068 615h0M1063 619h0M782 707h0M779 713h0M1059 561h0M1000 683h0M994 686h0M985 655h0M896 739h0M895 746h0M939 638h0M942 639h0M949 639h0M880 712h0M1034 727h0M1029 731h0M1001 710h0M1028 688h0M935 678h0M949 702h0M953 702h0M1087 597h0M1090 601h0M963 713h0M968 714h0M1058 610h0M868 682h0M1039 751h0M957 637h0M963 639h0M957 615h0M962 620h0M919 696h0M923 699h0M970 614h0M969 618h0M964 622h0M976 722h0M981 725h0M989 659h0M1071 591h0M954 714h0M1054 616h0M790 693h0M1007 579h0M881 702h0M857 747h0M846 684h0M927 683h0M992 671h0M986 670h0M851 744h0M835 656h0M837 661h0M976 720h0M938 633h0M1001 578h0M1006 581h0M925 619h0M999 695h0M985 695h0M997 705h0M999 709h0M999 714h0M915 737h0M920 739h0M1055 575h0M959 726h0M955 731h0M921 629h0M926 629h0M859 686h0M960 728h0M965 726h0M971 726h0M1014 701h0M869 732h0M918 748h0M923 750h0M1014 554h0M1060 727h0M938 750h0M1017 549h0M948 573h0M944 576h0M944 582h0M934 745h0M935 750h0M947 667h0M948 671h0M950 677h0M1031 696h0M1028 699h0M859 690h0M862 696h0M980 589h0M1037 716h0M947 632h0M941 636h0M898 640h0M902 643h0M908 643h0M974 540h0M979 543h0M941 678h0M935 679h0M930 682h0M1008 736h0M1005 739h0M872 752h0M924 712h0M906 688h0M888 717h0M1043 723h0M1045 727h0M1048 732h0M974 545h0M1050 633h0M1054 631h0M990 700h0M931 672h0M927 674h0M923 744h0M1021 602h0M989 697h0M981 648h0M984 653h0M1027 707h0M1023 711h0M959 729h0M926 744h0M987 711h0M989 717h0M1014 583h0M1008 584h0M1010 682h0M1013 688h0M1014 692h0M988 650h0M991 656h0M994 600h0M996 604h0M997 609h0M947 675h0M949 680h0M951 685h0M897 749h0M928 688h0M931 690h0M926 717h0M931 719h0M934 722h0M868 623h0M942 753h0M928 618h0M927 625h0M1016 702h0M1017 707h0M1032 724h0M1033 730h0M1023 626h0M1017 628h0M1013 631h0M957 548h0M959 544h0M1006 680h0M922 715h0M879 753h0M1063 633h0M1067 635h0M1070 639h0M963 653h0M968 652h0M984 638h0M1013 717h0M1085 606h0M1088 610h0M970 553h0M1017 578h0M1018 585h0M1022 590h0M897 598h0M926 664h0M927 670h0M925 620h0M1081 659h0M930 632h0M924 635h0M1011 641h0M1089 612h0M1048 731h0M972 707h0M927 699h0M1040 672h0M1044 674h0M946 656h0M854 725h0M859 728h0M858 734h0M917 743h0M999 600h0M898 719h0M900 724h0M900 730h0M896 707h0M978 700h0M812 686h0M808 689h0M804 691h0M862 687h0M896 718h0M991 753h0M865 699h0M863 705h0M859 706h0M972 542h0M914 739h0M908 741h0M905 738h0M970 662h0M968 668h0M937 733h0M1033 630h0M1069 675h0M1070 680h0M983 748h0M1059 651h0M984 707h0M988 706h0M826 695h0M943 682h0M855 751h0M898 652h0M902 655h0M929 732h0M934 729h0M933 723h0M967 741h0M969 745h0M926 639h0M931 638h0M866 743h0M871 747h0M1023 702h0M1019 704h0M961 547h0M956 551h0M893 705h0M899 704h0M901 708h0M1046 641h0M1046 647h0M1051 649h0M1000 724h0M999 726h0M900 729h0M1087 619h0M1083 624h0M1077 623h0M948 557h0M907 727h0M902 613h0M906 618h0M911 617h0M914 619h0M967 686h0M967 690h0M993 666h0M995 672h0M1006 661h0M1008 666h0M1014 667h0M1081 614h0M938 597h0M940 603h0M852 750h0M857 753h0M1017 711h0M1017 718h0M987 691h0M996 545h0M1037 566h0M1067 719h0M980 678h0M983 683h0M980 624h0M975 626h0M930 632h0M925 632h0M937 555h0M942 557h0M972 709h0M1055 687h0M1020 601h0M1021 606h0M871 683h0M1001 664h0M1005 661h0M1011 660h0M1044 666h0M1050 664h0M1029 570h0M952 629h0M940 552h0M1057 658h0M1041 604h0M1045 606h0M971 591h0M938 715h0M975 693h0M979 687h0M983 684h0M1065 691h0M1060 692h0M1057 689h0M902 739h0M987 714h0M992 718h0M1069 706h0M1012 748h0M916 644h0M912 648h0M907 652h0M940 669h0M940 674h0M870 737h0M866 741h0M918 681h0M922 681h0M829 651h0M826 656h0M1010 724h0M991 693h0M897 738h0M892 740h0M1051 615h0M1000 662h0M1002 668h0M1014 583h0M941 743h0M1070 641h0M1074 643h0M1079 646h0M1070 584h0M1077 586h0M858 720h0M861 723h0M862 728h0M938 737h0M746 694h0M830 693h0M1003 568h0M999 572h0M750 703h0M755 703h0M996 724h0M997 729h0M954 752h0M979 752h0M1043 720h0M1045 724h0M927 642h0M987 700h0M986 706h0M980 709h0M992 662h0M1089 585h0M1084 581h0M986 559h0M991 563h0M997 564h0M924 653h0M924 657h0M999 660h0M1001 663h0M1003 668h0M962 625h0M963 743h0M969 743h0M943 671h0M853 749h0M859 750h0M863 747h0M1084 644h0M988 709h0M991 713h0M1078 653h0M1083 650h0M951 607h0M949 612h0M946 615h0M933 724h0M865 713h0M817 666h0M818 670h0M1096 581h0M999 654h0M993 652h0M1030 675h0M902 734h0M965 710h0M1034 647h0M1036 654h0M837 708h0M979 667h0M933 678h0M873 710h0M875 714h0M878 717h0M906 713h0M1069 708h0M956 701h0M1058 577h0M743 717h0M828 745h0M824 746h0M938 682h0M893 731h0M889 735h0M888 739h0M1018 736h0M987 705h0M1054 647h0M1058 649h0M1073 685h0M978 627h0M973 626h0M974 728h0M978 726h0M1025 676h0M835 680h0M836 685h0M833 689h0M977 688h0M855 698h0M858 701h0M965 726h0M1088 593h0M960 725h0M957 728h0M951 728h0M919 653h0M916 641h0M866 744h0M1024 675h0M1025 680h0M927 620h0M926 624h0M945 720h0M1006 732h0M898 732h0M901 736h0M985 658h0M989 659h0M971 732h0M1025 715h0M1029 718h0M918 646h0M900 742h0M1044 730h0M1040 735h0M1005 601h0M993 598h0M991 602h0M989 607h0M941 752h0M877 724h0M832 660h0M1020 676h0M1082 649h0M930 673h0M1058 638h0M1059 644h0M966 714h0M873 726h0M874 732h0M878 735h0M1055 696h0M1059 696h0M947 668h0M944 670h0M921 693h0M973 721h0M978 725h0M993 648h0M818 670h0M1047 727h0M1024 599h0M1030 600h0M988 698h0M993 700h0M933 711h0M1047 570h0M976 753h0M897 714h0M900 711h0M928 749h0M1058 684h0M1042 680h0M1024 669h0M976 600h0M971 596h0M923 610h0M940 634h0M1052 661h0M777 672h0M1016 693h0M988 618h0M990 622h0M1075 669h0M913 732h0M919 733h0M1007 690h0M937 552h0M938 558h0M993 751h0M936 618h0M956 651h0M930 743h0M924 718h0M920 720h0M867 685h0M822 746h0M826 748h0M947 734h0M941 615h0M945 610h0M990 687h0M1013 665h0M1015 672h0M1019 673h0M964 720h0M964 726h0M1069 586h0M961 712h0M1001 662h0M988 693h0M993 689h0M996 685h0M985 705h0M988 708h0M1059 655h0M1053 658h0M971 710h0M975 705h0M902 641h0M906 636h0M926 745h0M931 745h0M867 688h0M1008 719h0M980 653h0M984 651h0M976 736h0M982 735h0M968 541h0M928 615h0M953 724h0M952 729h0M765 686h0M968 543h0M937 633h0M829 658h0M980 704h0M933 559h0M929 560h0M872 716h0M878 720h0M885 733h0M803 694h0M856 688h0M862 687h0M867 686h0M1046 641h0M1050 645h0M993 690h0M996 693h0M830 668h0M940 597h0M981 722h0M985 728h0M894 708h0M898 710h0M957 720h0M961 721h0M1082 600h0M1078 604h0M1076 610h0M1055 664h0M1068 695h0M931 749h0M935 750h0M915 582h0M1025 691h0M1025 696h0M871 674h0M1063 650h0M1058 652h0M896 673h0M889 673h0M912 682h0M911 687h0M1086 615h0M1084 619h0M996 689h0M991 687h0M987 683h0M922 684h0M926 687h0M929 691h0M960 607h0M956 607h0M873 690h0M1026 658h0M1028 664h0M1032 665h0M745 724h0M1029 732h0M1029 738h0M1025 741h0M971 597h0M960 718h0M829 658h0M831 662h0M895 721h0M899 723h0M1057 689h0M1063 690h0M1005 724h0M1000 726h0M996 724h0M998 710h0M999 716h0M996 719h0M959 542h0M1089 596h0M1093 602h0M1069 617h0M1069 621h0M1095 586h0M1093 591h0M1093 597h0M1029 582h0M923 571h0M922 576h0M964 705h0M1085 584h0M919 613h0M924 613h0M996 589h0M1011 753h0M1023 729h0M1077 627h0M1071 627h0M1069 623h0M874 722h0M820 648h0M815 653h0M819 676h0M825 676h0M772 696h0M985 722h0M849 730h0M850 736h0M1083 619h0M1053 649h0M1020 688h0M1025 690h0M924 752h0M928 691h0M931 696h0M831 748h0M837 746h0M838 741h0M762 739h0M766 741h0M770 745h0M978 735h0M974 739h0M971 743h0M998 676h0M938 709h0M907 733h0M908 739h0M890 733h0M892 739h0M895 744h0M986 715h0M982 720h0M851 717h0M856 726h0M927 636h0M932 640h0M938 643h0M1014 724h0M1018 719h0M949 550h0M968 544h0M987 615h0M987 620h0M953 666h0M1022 728h0M885 753h0M1037 574h0M1039 580h0M941 723h0M946 722h0M888 724h0M1033 693h0M1040 716h0M1044 712h0M1043 705h0M1073 644h0M962 610h0M961 616h0M1082 625h0M1076 623h0M860 680h0M1069 641h0M960 558h0M903 724h0M909 725h0M1012 734h0M1018 732h0M1054 567h0M1057 563h0M966 702h0M965 706h0M1024 678h0M1026 684h0M949 747h0M947 751h0M1015 722h0M1033 710h0M1036 705h0M894 750h0M846 741h0M846 746h0M847 751h0M899 662h0M1027 678h0M1025 682h0M976 717h0M964 727h0M970 696h0M965 694h0M960 696h0M1069 659h0M1075 661h0M974 550h0M971 556h0M969 560h0M985 699h0M943 668h0M1004 728h0M1009 733h0M1008 703h0M817 692h0M821 690h0M826 693h0M915 577h0M1008 706h0M1056 582h0M983 704h0M988 699h0M987 609h0M989 615h0M991 618h0M1017 747h0M995 711h0M993 715h0M988 716h0M869 744h0M990 656h0M968 718h0M969 724h0M974 604h0M947 614h0M972 709h0M1001 651h0M904 723h0M1035 634h0M945 543h0M1001 693h0M1004 699h0M1021 660h0M1034 634h0M1059 577h0M1057 582h0M1058 586h0M903 701h0M910 701h0M913 698h0M931 752h0M1019 722h0M1010 548h0M1017 550h0M1020 556h0M916 741h0M973 709h0M922 749h0M926 751h0M1034 748h0M983 733h0M927 565h0M870 754h0M949 617h0M919 716h0M923 720h0M927 725h0M935 669h0M933 675h0M989 703h0M945 549h0M897 679h0M1016 598h0M935 691h0M938 695h0M963 720h0M959 724h0M926 743h0M995 676h0M1010 721h0M822 745h0M1013 707h0M1005 733h0M1076 613h0M1072 616h0M1018 732h0M943 681h0M946 684h0M957 648h0M958 653h0M960 657h0M1050 745h0M1049 752h0M946 597h0M951 592h0M957 592h0M870 734h0M919 569h0M874 744h0M1014 596h0M1011 601h0M1032 569h0M1032 575h0M892 721h0M902 669h0M904 672h0M1036 573h0M1059 694h0M1062 699h0M1068 697h0M960 725h0M965 728h0M913 728h0M913 733h0M893 677h0M868 661h0M874 659h0M894 752h0M975 670h0M970 673h0M967 723h0M921 617h0M933 664h0M930 670h0M950 713h0M928 695h0M901 657h0M904 659h0M858 636h0M976 708h0M977 714h0M907 712h0M1073 664h0M1070 670h0M896 594h0M1078 654h0M1074 655h0M938 622h0M971 597h0M897 698h0M977 644h0M979 734h0M975 738h0M966 725h0M852 749h0M846 747h0M872 747h0M893 669h0M898 673h0M897 680h0M1072 664h0M986 703h0M837 716h0M839 720h0M993 643h0M1045 585h0M1042 588h0M976 702h0M975 708h0M927 631h0M926 635h0M862 695h0M868 699h0M871 704h0M900 616h0M915 649h0M913 653h0M915 657h0M920 569h0M920 576h0M925 579h0M1026 684h0M1072 588h0M1066 591h0M1061 595h0M1046 583h0M855 676h0M854 681h0M998 722h0M1002 724h0M983 728h0M984 733h0M986 738h0M867 722h0M872 723h0M876 721h0M1012 706h0M978 736h0M981 742h0M984 746h0M1039 556h0M935 740h0M940 742h0M944 746h0M899 671h0M897 675h0M870 698h0M869 704h0M870 710h0M925 749h0M1002 683h0M1004 687h0M1001 690h0M856 698h0M1077 583h0M772 729h0M1033 598h0M851 722h0M854 725h0M871 750h0M951 625h0M933 720h0M938 721h0M932 729h0M854 735h0M919 750h0M1056 738h0M1061 741h0M927 625h0M922 629h0M991 738h0M992 742h0M993 749h0M937 594h0M903 708h0M908 703h0M832 750h0M899 739h0M894 736h0M889 732h0M954 672h0M960 671h0M954 701h0M948 705h0M993 603h0M954 645h0M904 676h0M910 675h0M854 746h0M858 746h0M863 751h0M925 659h0M930 659h0M936 616h0M870 739h0M980 733h0M983 739h0M976 662h0M971 659h0M969 610h0M1060 644h0M1015 750h0M1016 745h0M1013 665h0M1012 669h0M1015 674h0M953 745h0M961 681h0M819 750h0M870 725h0M949 556h0M950 561h0M1039 743h0M1045 743h0M1049 745h0M1022 579h0M1026 579h0M888 713h0M885 717h0M882 719h0M1065 589h0M1067 718h0M962 682h0M962 687h0M959 690h0M1016 684h0M1020 687h0M1091 579h0M1007 706h0M1061 699h0M1066 699h0M859 655h0M747 717h0M749 722h0M982 752h0M981 637h0M1059 733h0M905 713h0M911 717h0M933 614h0M828 663h0M896 722h0M927 741h0M887 749h0M900 729h0M1038 719h0M957 747h0M1083 585h0M916 736h0M869 684h0M954 694h0M1040 673h0M1029 721h0M1026 724h0M1017 747h0M1023 747h0M1025 750h0M1074 645h0M978 734h0M865 747h0M864 752h0M869 671h0M1023 748h0M1029 749h0M920 609h0M921 615h0M1037 753h0M1039 748h0M1041 743h0M1031 671h0M900 697h0M923 610h0M926 737h0M924 741h0M885 752h0M1025 709h0M1028 714h0M1033 713h0M1015 714h0M1020 716h0M1023 722h0M893 717h0M1065 611h0M1084 633h0M1087 638h0M958 732h0M1063 730h0M1018 742h0M943 609h0M942 616h0M855 749h0M1078 669h0M1017 716h0M1020 713h0M837 698h0M838 702h0M963 706h0M1048 644h0M869 695h0M936 619h0M1026 719h0M830 714h0M831 718h0M894 661h0M1055 649h0M1060 652h0M983 676h0M979 681h0M977 685h0" fill="none" stroke="#d65d10" stroke-width="7.7" stroke-linecap="round"/>
<path d="M1098 691h0M1094 686h0M1092 679h0M1084 750h0M1090 753h0M1077 719h0M1082 720h0M1145 710h0M1141 713h0M1091 663h0M1088 668h0M1117 748h0M1112 749h0M1106 629h0M1109 630h0M1116 630h0M1159 732h0M1107 658h0M1122 694h0M1126 691h0M1098 619h0M1103 623h0M1090 685h0M1090 690h0M1137 753h0M1130 752h0M1118 746h0M1122 747h0M1085 668h0M1084 673h0M1141 685h0M1106 634h0M1112 634h0M1101 745h0M1097 748h0M1093 671h0M1096 675h0M1101 680h0M1085 719h0M1090 722h0M1095 723h0M1112 746h0M1118 744h0M1119 740h0M1115 658h0M1118 652h0M1089 662h0M1071 730h0M1075 733h0M1075 739h0M1084 749h0M1087 748h0M1106 577h0M1105 635h0M1101 659h0M1124 750h0M1068 725h0M1098 723h0M1098 728h0M1098 735h0M1165 706h0M1112 636h0M1105 636h0M1097 753h0M1087 664h0M1092 660h0M1092 653h0M1128 718h0M1115 642h0M1153 698h0M1113 742h0M1112 749h0M1119 728h0M1120 735h0M1118 738h0M1089 739h0M1096 688h0M1092 693h0M1163 693h0M1106 739h0M1084 667h0M1107 648h0M1109 651h0M1133 665h0M1132 669h0M1094 744h0M1101 743h0M1110 745h0M1130 729h0M1134 732h0M1136 739h0M1102 659h0M1095 633h0M1096 639h0M1109 662h0M1114 663h0M1117 665h0M1109 736h0M1149 752h0M1150 738h0M1096 665h0M1096 669h0M1093 650h0M1088 654h0M1108 663h0M1138 681h0M1138 686h0M1143 689h0M1108 727h0M1104 746h0M1102 738h0M1101 742h0M1121 750h0M1148 699h0M1089 676h0M1087 750h0M1102 659h0M1106 659h0M1091 718h0M1094 751h0M1123 658h0M1123 744h0M1127 747h0M1105 729h0M1103 735h0M1101 743h0M1072 709h0M1111 641h0M1075 715h0M1080 714h0M1153 708h0M1083 747h0M1086 750h0M1087 667h0M1083 669h0M1105 696h0M1089 676h0M1090 681h0M1122 704h0M1117 700h0M1099 612h0M1082 701h0M1160 682h0M1071 753h0M1102 729h0M1103 733h0M1099 736h0M1072 712h0M1098 679h0M1105 680h0M1093 672h0M1078 684h0M1099 628h0M1104 632h0M1108 659h0M1108 664h0M1107 668h0M1143 751h0M1085 747h0M1088 744h0M1094 687h0M1086 654h0M1116 743h0M1111 744h0M1095 682h0M1081 669h0M1082 676h0M1145 747h0M1084 732h0M1122 693h0M1097 709h0M1095 714h0M1078 721h0M1119 617h0M1143 696h0M1137 698h0M1071 711h0M1113 662h0M1119 660h0M1090 685h0M1108 738h0M1103 734h0M1147 694h0M1142 695h0M1138 693h0M1125 656h0M1124 647h0M1129 646h0M1134 644h0M1155 671h0M1152 675h0M1148 676h0M1102 607h0M1104 602h0M1141 672h0M1149 740h0M1154 738h0M1123 749h0M1121 665h0M1084 671h0M1146 748h0M1110 629h0M1157 696h0M1155 702h0M1155 678h0M1080 748h0M1081 753h0M1102 662h0M1105 656h0M1094 667h0M1100 697h0M1083 746h0M1087 672h0M1091 678h0M1084 707h0M1090 709h0M1143 742h0M1156 678h0M1081 751h0M1095 736h0M1100 737h0M1107 738h0M1109 678h0M1108 682h0M1130 688h0M1126 627h0M1128 633h0M1116 742h0M1118 749h0M1115 753h0M1083 680h0M1146 684h0M1115 665h0M1121 665h0M1150 728h0M1108 690h0M1112 695h0M1084 753h0M1140 669h0M1144 671h0M1094 685h0M1075 727h0M1090 747h0M1087 749h0M1078 739h0M1081 741h0M1085 743h0M1107 637h0M1114 748h0M1154 752h0M1120 733h0M1122 687h0M1126 690h0M1085 667h0M1129 749h0M1131 753h0M1097 650h0M1155 745h0M1096 740h0M1102 742h0M1144 744h0M1120 654h0M1125 655h0M1101 688h0M1107 688h0M1109 660h0M1165 698h0M1080 701h0M1074 704h0M1142 680h0M1136 684h0M1136 708h0M1094 753h0M1087 737h0M1131 670h0M1137 671h0M1102 643h0M1098 647h0M1103 593h0M1093 744h0M1093 749h0M1101 679h0M1099 683h0M1101 652h0M1104 658h0M1138 672h0M1136 742h0M1131 741h0M1101 728h0M1106 730h0M1091 743h0M1095 744h0M1088 694h0M1077 705h0M1078 710h0M1082 712h0M1104 648h0M1098 654h0M1083 745h0M1086 749h0M1090 754h0M1146 686h0M1094 630h0M1106 654h0M1091 686h0M1102 626h0M1090 644h0M1131 692h0M1098 628h0M1100 655h0M1140 694h0" fill="none" stroke="#5ba62b" stroke-width="7.7" stroke-linecap="round"/>
<circle cx="1004" cy="358.500" r="15.800" fill="#1a9670" stroke="#8fd3bc" stroke-width="1.200"/>
<circle cx="847.500" cy="427" r="15.800" fill="#e6a70a" stroke="#fbe9b8" stroke-width="2"/>
<circle cx="976" cy="715.500" r="16.500" fill="#df520c" stroke="#fbd9c2" stroke-width="2.200"/>
</svg>
<!-- ================= LEFT PANEL ================= -->
<div id="lp" class="abs"></div>
<div class="abs" style="left:441px;top:131px;width:1px;height:1113px;background:#e3e5e6"></div>
<div class="abs" style="left:20px;top:152px;font-size:22.500px;line-height:30px;color:#2c3032;letter-spacing:.6px;-webkit-text-stroke:.2px #2c3032">Layers</div>
<svg class="abs" style="left:351px;top:155px" width="24" height="24" viewBox="0 0 24 24" fill="none" stroke="#4a5054" stroke-width="1.900"><circle cx="9.500" cy="13.500" r="6.500"/><circle cx="14.500" cy="9.500" r="6.500"/></svg>
<div class="abs" style="left:0;top:198px;width:436px;height:1.500px;background:#e4e6e7"></div>
<!-- scrollbar -->
<div class="abs" style="left:434px;top:205px;width:6.500px;height:962px;background:#e2e4e5;border-radius:4px"></div>

<!-- layer card -->
<div class="abs" style="left:19px;top:226px;width:398px;height:99px;background:#fff;border:2.500px solid #1e63c3;border-radius:5px;box-shadow:0 1px 4px rgba(0,0,0,.12)"></div>
<div class="abs" style="left:42px;top:248.500px;width:22px;height:21.500px;border-radius:3px;background:#1f9a6e"></div>
<div class="abs" style="left:42px;top:248.500px;width:22px;height:22px;text-align:center;font-size:15px;line-height:22px;font-weight:bold;color:#bfe6d6">B</div>
<div class="abs" style="left:75px;top:250px;font-size:14.500px;line-height:20px;color:#858b8f;letter-spacing:1.700px">POINT</div>
<div class="abs" style="left:42px;top:281px;font-size:17.500px;line-height:24px;color:#2c3032;letter-spacing:.85px;-webkit-text-stroke:.25px #2c3032">Layer 2</div>
<div class="abs" style="left:319px;top:260px;width:76px;height:33px;border-radius:4px;background:#0a5fd6;box-shadow:0 1px 2px rgba(0,0,0,.25)"></div>
<div class="abs" style="left:319px;top:264px;width:76px;text-align:center;font-size:17px;line-height:24px;font-weight:bold;color:#fff;letter-spacing:.2px">Done</div>

<!-- Basic -->
<div class="sec" style="top:359px"><div class="bar"></div><div class="lbl">Basic</div><div class="keb"><i style="top:0"></i><i style="top:6.200px"></i><i style="top:12.400px"></i></div></div>
<div class="box" style="top:400.700px"></div>
<div class="abs" style="left:76px;top:411px;width:27px;height:27px;border-radius:4px;background:#f6f8fa"></div>
<svg class="abs" style="left:79px;top:414px" width="22" height="22" viewBox="0 0 22 22" fill="#2f6fd0"><circle cx="7" cy="3.500" r="1.300"/><circle cx="13.500" cy="3" r="1.300"/><circle cx="2.500" cy="9" r="1.500"/><circle cx="10" cy="9.500" r="1.800"/><circle cx="16.500" cy="8" r="1.200"/><circle cx="17.500" cy="13" r="1.600"/><circle cx="5" cy="15" r="1.200"/><circle cx="10.500" cy="17.500" r="1.800"/></svg>
<div class="abs" style="left:122.700px;top:413.500px;font-size:17px;line-height:24px;color:#3a3f43;letter-spacing:.5px">Point</div>

<!-- Fill color -->
<div class="sec" style="top:470px"><div class="bar"></div><div class="lbl">Fill Color</div><div class="keb"><i style="top:0"></i><i style="top:6.200px"></i><i style="top:12.400px"></i></div></div>
<div class="tog" style="top:471px"><i></i></div>
<div class="box" style="top:511.700px"></div>
<div class="abs" style="left:82px;top:529px;width:312px;height:14px;border-radius:3px;background:linear-gradient(90deg,#1b9e77 0 17%,#d95f02 17% 33.500%,#7570b3 33.500% 50%,#e7298a 50% 66.800%,#66a61e 66.800% 83.500%,#e6ab02 83.500% 100%)"></div>
<div class="abs" style="left:59px;top:575px;font-size:16.500px;line-height:22px;color:#868c90;letter-spacing:.62px">Color Based On</div>
<svg class="abs" style="left:200px;top:579px" width="20" height="20" viewBox="0 0 20 20" fill="none" stroke="#6d7377" stroke-width="1.600"><circle cx="10" cy="10" r="7.800"/><path d="M10 9v5.500" stroke-width="1.800"/><circle cx="10" cy="6.300" r="1" fill="#6d7377" stroke="none"/></svg>
<div class="box" style="top:599.700px"></div>
<div class="abs" style="left:75px;top:615px;width:88px;height:22px;border-radius:3px;background:#d4f3e9;border:1.500px solid #7cd3b6"></div>
<div class="abs" style="left:75px;top:615px;width:88px;text-align:center;font-family:'Liberation Mono',monospace;font-size:16.500px;line-height:22px;color:#2c8265;-webkit-text-stroke:.3px #2c8265;letter-spacing:.5px">integer</div>
<div class="abs" style="left:172px;top:612px;font-size:18px;line-height:26px;color:#3a3f43;letter-spacing:1px">cluster</div>
<svg class="abs" style="left:375px;top:616px" width="17" height="17" viewBox="0 0 17 17" stroke="#3a3f43" stroke-width="2.300" stroke-linecap="round"><path d="M3.500 3.500l10 10M13.500 3.500l-10 10"/></svg>

<!-- Outline -->
<div class="sec" style="top:669px"><div class="bar"></div><div class="lbl">Outline</div><div class="keb"><i style="top:0"></i><i style="top:6.200px"></i><i style="top:12.400px"></i></div></div>
<div class="tog" style="top:670px"><i></i></div>
<div class="box" style="top:710.700px"></div>
<div class="abs" style="left:76px;top:724px;width:43px;height:23px;border-radius:3px;background:#f5f6f6"></div>

<!-- color picker popup -->
<div class="abs" style="left:59px;top:760px;width:358px;height:277px;background:#fff;box-shadow:0 4px 10px rgba(0,0,0,.16),0 1px 3px rgba(0,0,0,.08)"></div>
<div class="abs" style="left:75.400px;top:777px;width:324.600px;height:176px;background:linear-gradient(180deg,rgba(255,255,255,0.93) 0.00% 9.09%,rgba(255,255,255,0.84) 9.09% 18.18%,rgba(255,255,255,0.52) 18.18% 26.14%,rgba(255,255,255,0.12) 26.14% 32.95%,rgba(0,0,0,0) 32.95% 42.05%,rgba(0,0,0,0.03) 42.05% 51.14%,rgba(0,0,0,0.08) 51.14% 60.23%,rgba(0,0,0,0.16) 60.23% 69.32%,rgba(0,0,0,0.28) 69.32% 78.41%,rgba(0,0,0,0.44) 78.41% 87.50%,rgba(0,0,0,0.6) 87.50% 94.32%,rgba(0,0,0,0.72) 94.32% 100.00%),linear-gradient(90deg,#ffe500 0.00% 8.48%,#ffc000 8.48% 14.03%,#ff9800 14.03% 18.78%,#f4601e 18.78% 22.74%,#e32222 22.74% 27.50%,#e81e63 27.50% 32.25%,#b424a8 32.25% 37.00%,#7a32c8 37.00% 41.76%,#4a44c4 41.76% 45.72%,#2f62d8 45.72% 50.48%,#2584de 50.48% 55.23%,#1aa2dc 55.23% 59.19%,#12b4c6 59.19% 63.95%,#10a08a 63.95% 68.70%,#3fa553 68.70% 72.66%,#84c040 72.66% 77.42%,#d2e038 77.42% 82.17%,#9e9e9e 82.17% 86.93%,#8a8378 86.93% 90.89%,#9a6a43 90.89% 95.64%,#5a3d30 95.64% 100.00%)"></div>
<div class="abs" style="left:75.400px;top:953px;width:324.600px;height:67px;background:linear-gradient(180deg,rgba(255,255,255,0.9) 0.00% 19.40%,rgba(255,255,255,0.55) 19.40% 52.24%,rgba(200,200,200,.5) 52.24% 59.70%,rgba(110,110,110,.62) 59.70% 68.66%,rgba(60,58,58,.82) 68.66% 85.07%,rgba(28,26,26,.97) 85.07% 100.00%),linear-gradient(90deg,#ffe500 0.00% 8.48%,#ffc000 8.48% 14.03%,#ff9800 14.03% 18.78%,#f4601e 18.78% 22.74%,#e32222 22.74% 27.50%,#e81e63 27.50% 32.25%,#b424a8 32.25% 37.00%,#7a32c8 37.00% 41.76%,#4a44c4 41.76% 45.72%,#2f62d8 45.72% 50.48%,#2584de 50.48% 55.23%,#1aa2dc 55.23% 59.19%,#12b4c6 59.19% 63.95%,#10a08a 63.95% 68.70%,#3fa553 68.70% 72.66%,#84c040 72.66% 77.42%,#d2e038 77.42% 82.17%,#9e9e9e 82.17% 86.93%,#8a8378 86.93% 90.89%,#9a6a43 90.89% 95.64%,#5a3d30 95.64% 100.00%)"></div>


<!-- Radius -->
<div class="sec" style="top:1073px"><div class="bar"></div><div class="lbl">Radius</div><div class="keb"><i style="top:0"></i><i style="top:6.200px"></i><i style="top:12.400px"></i></div></div>
<div class="abs" style="left:66px;top:1135.500px;width:241px;height:2.500px;border-radius:2px;background:#b4cff3"></div>
<div class="abs" style="left:66px;top:1135.300px;width:110px;height:3px;border-radius:2px;background:#1e63c3"></div>
<div class="abs" style="left:168px;top:1129px;width:16px;height:16px;border-radius:50%;background:#0a5fd6"></div>
<div class="abs" style="left:331px;top:1115px;width:78px;height:44px;background:#fff;border:1.500px solid #d5d8d9;border-radius:5px"></div>
<div class="abs" style="left:341px;top:1124px;font-size:18px;line-height:26px;color:#3a3f43;letter-spacing:.4px">45,7</div>

<!-- Label -->
<div class="sec" style="top:1195px"><div class="bar"></div><div class="lbl">Label</div><div class="keb"><i style="top:0"></i><i style="top:6.200px"></i><i style="top:12.400px"></i></div></div>
<div class="box" style="top:1236.500px"></div>

<!-- ================= SQL PANEL ================= -->
<div id="sql" class="abs">
  <div class="abs" style="left:0;top:68px;width:60px;height:352px;background:linear-gradient(90deg,#1d2f34 0,#1f2e32 40%,#25282b 100%)"></div>
  <div class="abs" style="left:0;top:65.800px;width:1550px;height:1.500px;background:#3a3e41"></div>
  <div class="abs" style="left:0;top:418.500px;width:1550px;height:1.500px;background:#3a3e41"></div>
  <div class="abs" style="left:44px;top:19px;font-size:22.500px;line-height:30px;color:#f3f4f4;letter-spacing:.1px">SQL</div>
  <svg class="abs" style="left:1503.500px;top:19.700px" width="26" height="26" viewBox="0 0 26 26" stroke="#fff" stroke-width="2.700" stroke-linecap="round"><path d="M4.500 4.500l17 17M21.500 4.500l-17 17"/></svg>
  <!-- cursor hand -->
  <svg class="abs" style="left:1503px;top:36px" width="24" height="26" viewBox="0 0 24 26"><path d="M5.500 3.500c1.200-.8 2.600-.2 3.100 1l2.400 5.500 1.300-.4c.9-.3 1.700 0 2.100.7.900-.6 2-.3 2.500.6.900-.4 1.900 0 2.300 1l1.300 4c.7 2.200-.2 4.500-2.300 5.500l-3.500 1.600c-2 .9-4.300.4-5.700-1.300L3.500 15.500c-.7-.9-.5-2.100.4-2.700.8-.5 1.800-.4 2.500.3l.8.800L4.500 6.500c-.5-1.200-.1-2.300 1-3z" fill="#fff" stroke="#25282b" stroke-width="1.400"/><path d="M13.500 14.500l1.500 4M16 13.500l1.500 4M18.500 13l1.300 3.600" stroke="#25282b" stroke-width="1.200" fill="none"/></svg>

  <div class="ln" style="top:75.300px">1
2
3
4
5
6
7
8
9
10
11
12

13</div>
  <div class="code" style="top:75.300px">WITH data <span class="k">AS</span>(
    <span class="k">SELECT</span> ST_GEOGPOINT(longitude, latitude) <span class="k">AS</span> geom
    <span class="k">FROM</span> `bigquery<span class="c">-</span>public<span class="c">-</span>data`.chicago_crime.crime
    <span class="k">WHERE</span> longitude <span class="k">IS</span> <span class="k">NOT</span> <span class="o">NULL</span> <span class="k">AND</span> latitude <span class="k">IS</span> <span class="k">NOT</span> <span class="o">NULL</span> <span class="k">AND</span> <span class="y">year</span> <span class="c">&gt;</span> <span class="n">2015</span> <span class="k">order</span> <span class="k">by</span> unique_key
    <span class="k">limit</span> <span class="n">10000</span>
),
clustered_points <span class="k">AS</span>
(
    <span class="k">SELECT</span> `carto<span class="c">-</span>la`.clustering.ST_CLUSTERKMEANS(ARRAY_AGG(geom ignore nulls), <span class="n">5</span>) <span class="k">AS</span> cluster_arr
    <span class="k">FROM</span> data
)
<span class="k">SELECT</span> cluster_element.cluster, `carto<span class="c">-</span>la`.transformations.ST_CENTERMEAN(ST_UNION_AGG(cluster_element.geom)) <span class="k">AS</span> geom <span class="k">FROM</span>
clustered_points, UNNEST(cluster_arr) <span class="k">AS</span> cluster_element <span class="k">GROUP</span> <span class="k">BY</span> cluster_element.cluster</div>

  <svg class="abs" style="left:45px;top:444px" width="32" height="32" viewBox="0 0 32 32" fill="none" stroke="#9da3a6" stroke-width="2.400" stroke-linecap="round" stroke-linejoin="round"><circle cx="16" cy="16" r="13"/><path d="M10 16.500l4.500 4.500 8-9"/></svg>
  <div class="abs" style="left:88px;top:446px;font-size:18.500px;line-height:28px;font-weight:bold;color:#f3f4f4;letter-spacing:.1px">Ready</div>
  <div class="abs" style="left:1429px;top:431px;width:110px;height:56px;border-radius:5px;background:#44d690"></div>
  <svg class="abs" style="left:1452px;top:448px" width="20" height="22" viewBox="0 0 20 22" fill="none" stroke="#1c2b25" stroke-width="2.400" stroke-linejoin="round"><path d="M4 3l12.500 8L4 19z"/></svg>
  <div class="abs" style="left:1487px;top:446px;font-size:19px;line-height:28px;color:#244a3a;letter-spacing:.3px">run</div>
</div>
<div class="abs" style="left:1989.800px;top:0;width:1.200px;height:1244px;background:rgba(0,0,0,.38)"></div>

</div>
</body>
</html>
